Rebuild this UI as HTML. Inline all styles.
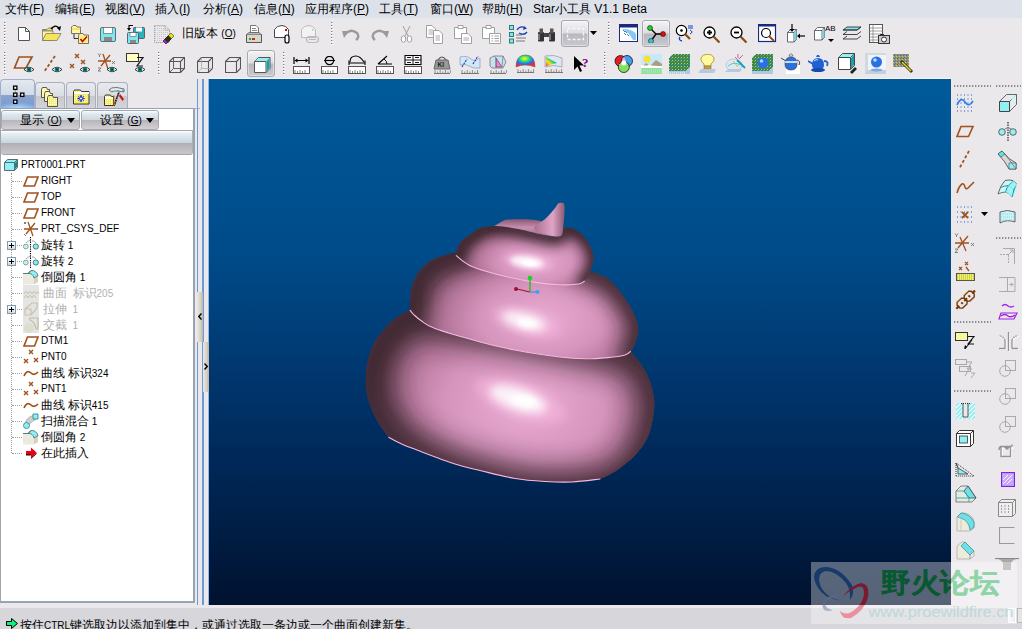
<!DOCTYPE html>
<html><head><meta charset="utf-8">
<style>
*{box-sizing:border-box}
body{margin:0;width:1022px;height:629px;position:relative;overflow:hidden;background:#ebe8ec;font-family:"Liberation Sans",sans-serif;font-size:12px;color:#000}
.a{position:absolute}
#menu{left:0;top:0;width:1022px;height:18px;background:#dde2ea}
#menu span{position:absolute;top:3px;white-space:nowrap;font-size:12px;line-height:13px}
#vp{left:209px;top:79px;width:742px;height:526px;background:linear-gradient(#005a9a 0%,#004a88 35%,#002a5c 70%,#00122f 100%)}
#panel{left:0;top:108px;width:195px;height:495px;background:#fff;border:1px solid #a0a4ac;border-right:2px solid #9aa2b0;border-bottom:2px solid #98a4b4;border-top-color:#8fa2bf}
#status{left:0;top:608px;width:1022px;height:21px;background:#d7d6db}

.tab{border:1px solid #a8b0bc;border-bottom:none;border-radius:4px 4px 0 0;background:linear-gradient(#e8eaef,#dcdee4 50%,#c9c9cd 51%,#d4d4d8)}
.tab.act{border-color:#9db0d0;background:radial-gradient(ellipse 60% 25% at 50% 100%,#a8dcff,rgba(150,200,255,0) 100%),linear-gradient(#e4e9f1,#d2dae6 50%,#8ba3cd 52%,#7f9bd0 85%,#8cb4e8)}
.btn{border:1px solid #a8a8ae;border-radius:3px;background:linear-gradient(#fbfcfd 0,#e2e9ef 15%,#ccd8e1 50%,#b8b6ba 52%,#d2d0d4 100%)}
.btn span{position:absolute;top:3px;font-size:12px;line-height:13px;white-space:nowrap}
.btn i{position:absolute;top:7px;width:0;height:0;border-left:4px solid transparent;border-right:4px solid transparent;border-top:5px solid #000}
.hdr{border-top:1px solid #a8a8ac;border-bottom:1px solid #a4a4a8;border-right:1px solid #b0b0b4;border-radius:0 0 3px 3px;background:linear-gradient(#ffffff 0,#e8eff5 10%,#c8d6e0 50%,#b0aeb2 51%,#c9c7cb 100%)}
.tt{font-size:10px;line-height:16px;white-space:nowrap}
.c{font-size:12px}
.plus{width:9px;height:9px;border:1px solid #7e98bc;background:linear-gradient(#fff,#ddd8c8)}
.plus:before{content:"";position:absolute;left:1px;top:3px;width:5px;height:1px;background:#000}
.plus:after{content:"";position:absolute;left:3px;top:1px;width:1px;height:5px;background:#000}
.spl{background:linear-gradient(90deg,#ece8e0,#d4d0c4 60%,#b8b4a8)}
.spl b{position:absolute;left:0;font-size:12px;line-height:10px;font-weight:bold}
.grip{width:2px;background:repeating-linear-gradient(90deg,transparent 0 0),repeating-linear-gradient(#7a7a82 0 1px,#fbfbfd 1px 2px,transparent 2px 3px);background-size:2px 100%}
.grip:after{content:"";position:absolute;left:1px;top:0;width:1px;height:100%;background:repeating-linear-gradient(#c8c8ce 0 1px,#fff 1px 2px,transparent 2px 3px)}
.griph{height:2px;background:repeating-linear-gradient(90deg,#8c8c94 0 1px,#c8c8cc 1px 2px,transparent 2px 3px)}
.pbtn{border:1px solid #a8a8b0;border-radius:3px;background:linear-gradient(#f4f4f6,#dcdce2 48%,#b8b8bf 52%,#c8c8ce);box-shadow:inset 0 0 0 1px rgba(255,255,255,.4)}
</style></head><body>
<div id="menu" class="a">
<span style="left:5px">文件(<u>F</u>)</span>
<span style="left:55px">编辑(<u>E</u>)</span>
<span style="left:105px">视图(<u>V</u>)</span>
<span style="left:155px">插入(<u>I</u>)</span>
<span style="left:203px">分析(<u>A</u>)</span>
<span style="left:254px">信息(<u>N</u>)</span>
<span style="left:305px">应用程序(<u>P</u>)</span>
<span style="left:379px">工具(<u>T</u>)</span>
<span style="left:430px">窗口(<u>W</u>)</span>
<span style="left:482px">帮助(<u>H</u>)</span>
<span style="left:533px">Star小工具 V1.1 Beta</span>
</div>
<div class="a" style="left:209px;top:78px;width:742px;height:1px;background:#f6f0ee"></div>
<div id="vp" class="a"></div>

<!-- left tabs -->
<div class="a" style="left:0;top:108px;width:200px;height:1px;background:#a9b5c8"></div>
<div class="a tab act" style="left:0;top:79px;width:35px;height:30px"><svg class="a" style="left:11px;top:5px" width="14" height="20"><path d="M3.5 4 V17 M5 10.5 H10" stroke="#999" stroke-width="0.8"/><rect x="1.6" y="1.1" width="3.3" height="3.3" fill="#fff" stroke="#000" stroke-width="1.3"/><rect x="1.6" y="8.1" width="3.3" height="3.3" fill="#fff" stroke="#000" stroke-width="1.3"/><rect x="8.6" y="8.1" width="3.3" height="3.3" fill="#fff" stroke="#000" stroke-width="1.3"/><rect x="1.6" y="15.1" width="3.3" height="3.3" fill="#fff" stroke="#000" stroke-width="1.3"/></svg></div>
<div class="a tab" style="left:35px;top:82px;width:30px;height:26px"><svg class="a" style="left:4px;top:3px" width="22" height="22"><defs><pattern id="chk" width="2" height="2" patternUnits="userSpaceOnUse"><rect width="2" height="2" fill="#f8f070"/><rect width="1" height="1" fill="#fff"/></pattern></defs><g stroke="#444" stroke-width="0.9"><path d="M1.5 3.5 L2.5 1.5 H6.5 L7.5 3.5 H9.5 V11.5 H1.5Z" fill="#fff9b0"/><path d="M4.5 7.5 L5.5 5.5 H9.5 L10.5 7.5 H12.5 V15.5 H4.5Z" fill="#fff9b0"/><path d="M7.5 11.5 L8.5 9.5 H12.5 L13.5 11.5 H17.5 V20.5 H7.5Z" fill="url(#chk)"/></g></svg></div>
<div class="a tab" style="left:66px;top:82px;width:30px;height:26px"><svg class="a" style="left:5px;top:6px" width="19" height="16"><defs><pattern id="chk2" width="2" height="2" patternUnits="userSpaceOnUse"><rect width="2" height="2" fill="#f8ee50"/><rect width="1" height="1" fill="#fffce0"/></pattern></defs><path d="M1.5 2.5 L2.5 1 H8.5 L9.5 2.5 H17 V15 H1.5Z" fill="url(#chk2)" stroke="#222" stroke-width="0.9"/><path d="M2 3 H17 V5 H2Z" fill="#fff"/><path d="M9 6 V13 M5.5 9.5 H12.5" stroke="#0a20e0" stroke-width="1.3"/><circle cx="9" cy="9.5" r="1.6" fill="#fff" stroke="#0a20e0" stroke-width="1"/><path d="M6.5 7 L7 7.5 M11.5 7 L11 7.5 M6.5 12 L7 11.5 M11.5 12 L11 11.5" stroke="#0a20e0" stroke-width="1.4"/></svg></div>
<div class="a tab" style="left:97px;top:82px;width:31px;height:26px"><svg class="a" style="left:5px;top:3px" width="24" height="22"><path d="M1.5 10.5 L2.5 9 H7.5 L8.5 10.5 H10.5 V19.5 H1.5Z" fill="url(#chk2)" stroke="#222" stroke-width="0.9"/><path d="M2 11 H10 V13 H2Z" fill="#fff"/><path d="M6 4 Q8 1 14 1.5 L21 3 V6 L15 5 Q11 4.5 9 6 Z" fill="#e8e8e8" stroke="#555" stroke-width="0.8"/><path d="M8 6 L10 5 M14 5 L16 4.5 M19 4 L21 5" stroke="#20c0d0" stroke-width="1.2"/><path d="M16 6 L11 20" stroke="#111" stroke-width="1.6"/><path d="M16 6 L11 20" stroke="#fff" stroke-width="0.8" stroke-dasharray="1 1.5"/><path d="M17 8 L21 13 L19.5 15 L16 10Z" fill="#d01010"/><path d="M11 9 V20" stroke="#c87830" stroke-width="0.9"/></svg></div>
<!-- panel -->
<div id="panel" class="a"></div>
<div class="a btn" style="left:1px;top:110px;width:79px;height:20px"><span style="left:18px">显示 <b style="font-weight:normal;font-size:10px">(<u>O</u>)</b></span><i style="left:65px"></i></div>
<div class="a btn" style="left:81px;top:110px;width:78px;height:20px"><span style="left:18px">设置 <b style="font-weight:normal;font-size:10px">(<u>G</u>)</b></span><i style="left:64px"></i></div>
<div class="a hdr" style="left:1px;top:130px;width:192px;height:25px"></div>
<div class="tree">
<div class="a" style="left:11px;top:173px;width:1px;height:280px;border-left:1px dotted #9a9a9a"></div>
<div class="a" style="left:4px;top:159px"><svg width="14" height="12"><path d="M0.5 3.5 L3.5 0.5 H13.5 V8.5 L10.5 11.5 H0.5 Z" fill="#8ff0f5" stroke="#5a6a70"/><path d="M10.5 3.5 V11.5 M10.5 3.5 L13.5 0.5 M0.5 3.5 H10.5" stroke="#5a6a70" fill="none"/><path d="M11 4 L13 2 V8 L11 10Z" fill="#138a90"/></svg></div>
<div class="a tt" style="left:21px;top:157px">PRT0001.PRT</div>
<div class="a" style="left:12px;top:181px;width:10px;height:1px;border-top:1px dotted #9a9a9a"></div>
<div class="a" style="left:23px;top:176px;line-height:0"><svg width="16" height="11"><path d="M4.5 1 H15 L11.5 10 H1 Z" fill="none" stroke="#a0521e" stroke-width="1.6"/></svg></div>
<div class="a tt" style="left:41px;top:173px;color:#000">RIGHT</div>
<div class="a" style="left:12px;top:197px;width:10px;height:1px;border-top:1px dotted #9a9a9a"></div>
<div class="a" style="left:23px;top:192px;line-height:0"><svg width="16" height="11"><path d="M4.5 1 H15 L11.5 10 H1 Z" fill="none" stroke="#a0521e" stroke-width="1.6"/></svg></div>
<div class="a tt" style="left:41px;top:189px;color:#000">TOP</div>
<div class="a" style="left:12px;top:213px;width:10px;height:1px;border-top:1px dotted #9a9a9a"></div>
<div class="a" style="left:23px;top:208px;line-height:0"><svg width="16" height="11"><path d="M4.5 1 H15 L11.5 10 H1 Z" fill="none" stroke="#a0521e" stroke-width="1.6"/></svg></div>
<div class="a tt" style="left:41px;top:205px;color:#000">FRONT</div>
<div class="a" style="left:12px;top:229px;width:10px;height:1px;border-top:1px dotted #9a9a9a"></div>
<div class="a" style="left:23px;top:221px;line-height:0"><svg width="16" height="16"><path d="M3 13 L12 2 M5 1 L10 15 M1 8 H13" stroke="#a0521e" stroke-width="1.3" fill="none"/><path d="M1 1 L3 3 M3 1 L1 3 M13 7 L15 9 M15 7 L13 9 M1 13 L3 15" stroke="#707070" stroke-width="0.9"/></svg></div>
<div class="a tt" style="left:41px;top:221px;color:#000">PRT_CSYS_DEF</div>
<div class="a" style="left:12px;top:245px;width:10px;height:1px;border-top:1px dotted #9a9a9a"></div>
<div class="a plus" style="left:7px;top:241px"></div>
<div class="a" style="left:23px;top:237px;line-height:0"><svg width="16" height="16"><path d="M3 6 Q7 2 8 4 M9 4 Q11 3 13 6" fill="none" stroke="#8a9a9a" stroke-width="0.8"/><circle cx="2.8" cy="9.5" r="2.4" fill="#c4f4f8" stroke="#708a8a" stroke-width="0.8"/><circle cx="12.8" cy="9.5" r="2.6" fill="#7eeef4" stroke="#506868" stroke-width="0.9"/><path d="M7.5 0 V16" stroke="#000" stroke-width="1.1" stroke-dasharray="1.3 1"/></svg></div>
<div class="a tt" style="left:41px;top:237px;color:#000"><span class="c">旋转</span> 1</div>
<div class="a" style="left:12px;top:261px;width:10px;height:1px;border-top:1px dotted #9a9a9a"></div>
<div class="a plus" style="left:7px;top:257px"></div>
<div class="a" style="left:23px;top:253px;line-height:0"><svg width="16" height="16"><path d="M3 6 Q7 2 8 4 M9 4 Q11 3 13 6" fill="none" stroke="#8a9a9a" stroke-width="0.8"/><circle cx="2.8" cy="9.5" r="2.4" fill="#c4f4f8" stroke="#708a8a" stroke-width="0.8"/><circle cx="12.8" cy="9.5" r="2.6" fill="#7eeef4" stroke="#506868" stroke-width="0.9"/><path d="M7.5 0 V16" stroke="#000" stroke-width="1.1" stroke-dasharray="1.3 1"/></svg></div>
<div class="a tt" style="left:41px;top:253px;color:#000"><span class="c">旋转</span> 2</div>
<div class="a" style="left:12px;top:277px;width:10px;height:1px;border-top:1px dotted #9a9a9a"></div>
<div class="a" style="left:23px;top:269px;line-height:0"><svg width="16" height="16"><path d="M0 4.5 H5 Q10 4 11 9 V15.5 H0Z" fill="#eceadc"/><path d="M11 9 L15 6.5 V13 L11 15.5Z" fill="#d4d2c0"/><path d="M5 4.5 Q10 4 11 9 L15 6.5 Q13 1 8 1.5 Z" fill="#8ef0f6" stroke="#3a6a70" stroke-width="0.8"/><path d="M0 4.5 H5 L8 1.5" fill="none" stroke="#3a5a60" stroke-width="0.8"/></svg></div>
<div class="a tt" style="left:41px;top:269px;color:#000"><span class="c">倒圆角</span> 1</div>
<div class="a" style="left:12px;top:293px;width:10px;height:1px;border-top:1px dotted #9a9a9a"></div>
<div class="a" style="left:23px;top:285px;line-height:0"><svg width="16" height="16"><rect x="0" y="0" width="16" height="16" fill="#e4e4e4"/><path d="M1 9 Q3 4 5 9 Q7 4 9 9 Q11 4 13 9 Q15 4 16 9 M1 13 Q3 8 5 13 Q7 8 9 13 Q11 8 13 13" stroke="#c8c4a8" fill="none" stroke-width="1"/></svg></div>
<div class="a tt" style="left:43px;top:285px;color:#b0b0b0"><span class="c">曲面</span>&nbsp; <span class="c">标识</span>205</div>
<div class="a" style="left:12px;top:309px;width:10px;height:1px;border-top:1px dotted #9a9a9a"></div>
<div class="a plus" style="left:7px;top:305px"></div>
<div class="a" style="left:23px;top:301px;line-height:0"><svg width="16" height="16"><rect x="0" y="0" width="16" height="16" fill="#e4e4e4"/><path d="M2 8 H8 V14 H2Z M2 8 L9 2 H14 V7 L8 14" fill="none" stroke="#c8c4a8" stroke-width="1.2"/></svg></div>
<div class="a tt" style="left:43px;top:301px;color:#b0b0b0"><span class="c">拉伸</span>&nbsp; 1</div>
<div class="a" style="left:12px;top:325px;width:10px;height:1px;border-top:1px dotted #9a9a9a"></div>
<div class="a" style="left:23px;top:317px;line-height:0"><svg width="16" height="16"><rect x="0" y="0" width="16" height="16" fill="#e4e4e4"/><circle cx="6" cy="11" r="5" fill="#dcdcd0"/><path d="M7 1 H15 V12 L13 12 Q12 5 7 3Z" fill="none" stroke="#c0bca0" stroke-width="1.2"/></svg></div>
<div class="a tt" style="left:43px;top:317px;color:#b0b0b0"><span class="c">交截</span>&nbsp; 1</div>
<div class="a" style="left:12px;top:341px;width:10px;height:1px;border-top:1px dotted #9a9a9a"></div>
<div class="a" style="left:23px;top:336px;line-height:0"><svg width="16" height="11"><path d="M4.5 1 H15 L11.5 10 H1 Z" fill="none" stroke="#a0521e" stroke-width="1.6"/></svg></div>
<div class="a tt" style="left:41px;top:333px;color:#000">DTM1</div>
<div class="a" style="left:12px;top:357px;width:10px;height:1px;border-top:1px dotted #9a9a9a"></div>
<div class="a" style="left:23px;top:349px;line-height:0"><svg width="16" height="16"><path d="M6 1 L10 5 M10 1 L6 5 M1 10 L5 14 M5 10 L1 14 M11 9 L15 13 M15 9 L11 13" stroke="#a0521e" stroke-width="1.4"/></svg></div>
<div class="a tt" style="left:41px;top:349px;color:#000">PNT0</div>
<div class="a" style="left:12px;top:373px;width:10px;height:1px;border-top:1px dotted #9a9a9a"></div>
<div class="a" style="left:23px;top:365px;line-height:0"><svg width="16" height="16"><path d="M1 11 Q4 4 8 8 Q11 11 15 7" stroke="#a0521e" stroke-width="1.7" fill="none"/></svg></div>
<div class="a tt" style="left:41px;top:365px;color:#000"><span class="c">曲线</span> <span class="c">标识</span>324</div>
<div class="a" style="left:12px;top:389px;width:10px;height:1px;border-top:1px dotted #9a9a9a"></div>
<div class="a" style="left:23px;top:381px;line-height:0"><svg width="16" height="16"><path d="M6 1 L10 5 M10 1 L6 5 M1 10 L5 14 M5 10 L1 14 M11 9 L15 13 M15 9 L11 13" stroke="#a0521e" stroke-width="1.4"/></svg></div>
<div class="a tt" style="left:41px;top:381px;color:#000">PNT1</div>
<div class="a" style="left:12px;top:405px;width:10px;height:1px;border-top:1px dotted #9a9a9a"></div>
<div class="a" style="left:23px;top:397px;line-height:0"><svg width="16" height="16"><path d="M1 11 Q4 4 8 8 Q11 11 15 7" stroke="#a0521e" stroke-width="1.7" fill="none"/></svg></div>
<div class="a tt" style="left:41px;top:397px;color:#000"><span class="c">曲线</span> <span class="c">标识</span>415</div>
<div class="a" style="left:12px;top:421px;width:10px;height:1px;border-top:1px dotted #9a9a9a"></div>
<div class="a" style="left:23px;top:413px;line-height:0"><svg width="16" height="16"><path d="M2 11 Q3 5 9 3 L14 1 L15 5 L10 8 Q6 10 5 14Z" fill="#d0d0d0" stroke="#909090" stroke-width="0.6"/><path d="M10 1 H15 V6 H10Z" fill="#8ff0f4" stroke="#309090" stroke-width="0.9"/><circle cx="3.5" cy="12.5" r="3" fill="#8ff0f4" stroke="#309090" stroke-width="0.9"/></svg></div>
<div class="a tt" style="left:41px;top:413px;color:#000"><span class="c">扫描混合</span> 1</div>
<div class="a" style="left:12px;top:437px;width:10px;height:1px;border-top:1px dotted #9a9a9a"></div>
<div class="a" style="left:23px;top:429px;line-height:0"><svg width="16" height="16"><path d="M0 4.5 H5 Q10 4 11 9 V15.5 H0Z" fill="#eceadc"/><path d="M11 9 L15 6.5 V13 L11 15.5Z" fill="#d4d2c0"/><path d="M5 4.5 Q10 4 11 9 L15 6.5 Q13 1 8 1.5 Z" fill="#8ef0f6" stroke="#3a6a70" stroke-width="0.8"/><path d="M0 4.5 H5 L8 1.5" fill="none" stroke="#3a5a60" stroke-width="0.8"/></svg></div>
<div class="a tt" style="left:41px;top:429px;color:#000"><span class="c">倒圆角</span> 2</div>
<div class="a" style="left:12px;top:453px;width:10px;height:1px;border-top:1px dotted #9a9a9a"></div>
<div class="a" style="left:23px;top:445px;line-height:0"><svg width="16" height="16"><path d="M3 6 H8 V2.5 L13.5 7.5 L8 12.5 V9 H3Z" fill="#f00018"/><path d="M3 9 H8 V12.5 L13.5 7.5 V9 L8 14 V10.5 H3Z" fill="#500008"/></svg></div>
<div class="a tt" style="left:41px;top:445px;color:#000"><span class="c">在此插入</span></div>
</div>
<!-- splitter -->
<div class="a" style="left:197px;top:79px;width:1px;height:526px;background:#6a9ad8"></div>
<div class="a" style="left:202px;top:79px;width:2px;height:526px;background:#6a9ad8"></div>
<div class="a" style="left:208px;top:79px;width:1px;height:526px;background:#90b8e8"></div>
<div class="a spl" style="left:197px;top:292px;width:6px;height:50px"><svg class="a" style="left:1px;top:21px" width="4" height="7"><path d="M3.5 0.5 L0.8 3.5 L3.5 6.5" fill="none" stroke="#000" stroke-width="1.4"/></svg></div>
<div class="a spl" style="left:203px;top:342px;width:6px;height:50px"><svg class="a" style="left:1px;top:21px" width="4" height="7"><path d="M0.5 0.5 L3.2 3.5 L0.5 6.5" fill="none" stroke="#000" stroke-width="1.4"/></svg></div>
<div id="status" class="a"></div>
<div class="a grip" style="left:4px;top:22px;height:24px"></div>
<svg class="a" style="left:17px;top:26px" width="14" height="16" viewBox="0 0 14 16"><path d="M1.5 1.5 H8.5 L12.5 5.5 V14.5 H1.5Z" fill="#fff" stroke="#555"/><path d="M8.5 1.5 V5.5 H12.5" fill="none" stroke="#555"/></svg>
<svg class="a" style="left:41px;top:24px" width="22" height="18" viewBox="0 0 22 18"><path d="M1.5 5.5 H6 L7.5 4 H11.5 V7 H1.5Z" fill="#f5ea60" stroke="#666" stroke-width="0.8"/><path d="M1.5 7 H12 V16.5 H1.5Z" fill="#fdf3a0" stroke="#777" stroke-width="0.8"/><path d="M1.5 16.5 L5 9.5 H20 L16 16.5Z" fill="#f6e45a" stroke="#777" stroke-width="0.8"/><path d="M10 5 Q14 0 18 4" fill="none" stroke="#000" stroke-width="1.3"/><path d="M16 4 L20 2 L19 7Z" fill="#000"/></svg>
<svg class="a" style="left:70px;top:24px" width="20" height="20" viewBox="0 0 20 20"><path d="M1.5 3 L3 1.5 H6 L7 3 H10.5 V9.5 H1.5Z" fill="#fff6a0" stroke="#555" stroke-width="0.8"/><path d="M1.5 5 H10.5" stroke="#e8d040"/><path d="M4 10 V14.5 H8" fill="none" stroke="#000" stroke-width="0.8"/><path d="M8.5 11 L10 9.5 H13 L14 11 H18.5 V19.5 H8.5Z" fill="#fff080" stroke="#555" stroke-width="0.8"/><path d="M10.5 15 L12.5 17.5 L17 12.5" fill="none" stroke="#c00" stroke-width="1.6"/></svg>
<svg class="a" style="left:100px;top:27px" width="16" height="15" viewBox="0 0 16 15"><rect x="0.5" y="0.5" width="15" height="14" rx="1.5" fill="#7fe7ee" stroke="#5a6e74"/><rect x="3.5" y="0.5" width="9" height="6" fill="#fff" stroke="#5a6e74" stroke-width="0.7"/><rect x="4" y="10" width="8" height="4" fill="#888"/></svg>
<svg class="a" style="left:126px;top:24px" width="20" height="20" viewBox="0 0 20 20"><rect x="7.5" y="3.5" width="11" height="11" rx="1" fill="#2fb0b8" stroke="#445" stroke-width="0.8"/><rect x="10" y="3.5" width="6" height="4" fill="#fff"/><rect x="1.5" y="8.5" width="11" height="11" rx="1" fill="#7fe7ee" stroke="#445" stroke-width="0.8"/><rect x="4" y="8.5" width="6" height="4" fill="#fff" stroke="#445" stroke-width="0.5"/><rect x="4" y="16" width="6" height="3" fill="#888"/><path d="M7 1.5 H3 V5" fill="none" stroke="#000" stroke-width="1.1"/><path d="M1 4 L3 7 L5 4Z" fill="#000"/></svg>
<svg class="a" style="left:153px;top:24px" width="22" height="20" viewBox="0 0 22 20"><defs><pattern id="dp" width="2" height="2" patternUnits="userSpaceOnUse"><rect width="1" height="1" fill="#c8c8c8"/></pattern></defs><path d="M1.5 1.5 H12 L16.5 6 V18.5 H1.5Z" fill="url(#dp)" stroke="#9a9a9a" stroke-width="1" stroke-dasharray="1 1"/><path d="M12 1.5 V6 H16.5" fill="none" stroke="#9a9a9a" stroke-dasharray="1 1"/><path d="M10 17 L18 9 L21 12 L13 20Z" fill="#303010" stroke="#000" stroke-width="0.7"/><path d="M15.5 11.5 L18 9 L21 12 L18.5 14.5Z" fill="#e6e020"/><path d="M10 17 L11.5 15.5 L14.5 18.5 L13 20Z" fill="#b020c0"/></svg>
<div class="a" style="left:182px;top:26px;font-size:12px;line-height:14px;white-space:nowrap">旧版本 <span style="font-size:10px">(<u>O</u>)</span></div>
<svg class="a" style="left:245px;top:24px" width="18" height="20" viewBox="0 0 18 20"><path d="M5.5 1.5 H11 L13.5 4 V10 H5.5Z" fill="#fff" stroke="#555" stroke-width="0.8"/><path d="M7 4.5 H11 M7 6.5 H12 M7 8.5 H12" stroke="#555" stroke-width="0.7"/><path d="M1.5 10.5 H16.5 V18.5 H1.5Z" fill="#d8d8c8" stroke="#555"/><path d="M1.5 10.5 L4 8.5 H14 L16.5 10.5" fill="#bbb" stroke="#555" stroke-width="0.7"/><rect x="4" y="14" width="2" height="2" fill="#2a2"/><rect x="7" y="14" width="3" height="2" fill="#c22"/></svg>
<svg class="a" style="left:273px;top:24px" width="18" height="20" viewBox="0 0 18 20"><path d="M1.5 5.5 Q4 1.5 9 1.5 Q13 1.5 15.5 5.5 V13.5 H1.5Z" fill="#fff" stroke="#444"/><rect x="12" y="5" width="2" height="2" fill="#d00"/><rect x="12" y="11" width="4" height="8" rx="2" fill="#fff" stroke="#000" stroke-width="1.2"/></svg>
<svg class="a" style="left:300px;top:24px" width="20" height="20" viewBox="0 0 20 20"><path d="M1.5 5.5 Q4 1.5 9 1.5 Q13 1.5 15.5 5.5 V13.5 H1.5Z" fill="#f2f2f2" stroke="#bbb"/><rect x="12" y="5" width="1.5" height="1.5" fill="#bbb"/><rect x="6.5" y="12.5" width="12" height="6" rx="3" fill="none" stroke="#bbb" stroke-width="1.2"/><path d="M9 15.5 H16" stroke="#bbb"/></svg>
<div class="a grip" style="left:331px;top:22px;height:24px"></div>
<svg class="a" style="left:342px;top:29px" width="19" height="12" viewBox="0 0 19 12"><path d="M3 5 Q9 -1 15 4 Q18 8 14 11" fill="none" stroke="#9a9a9a" stroke-width="2.4"/><path d="M0 2 L7 2 L2 9Z" fill="#9a9a9a"/></svg>
<svg class="a" style="left:370px;top:29px" width="19" height="12" viewBox="0 0 19 12"><path d="M16 5 Q10 -1 4 4 Q1 8 5 11" fill="none" stroke="#9a9a9a" stroke-width="2.4"/><path d="M19 2 L12 2 L17 9Z" fill="#9a9a9a"/></svg>
<svg class="a" style="left:400px;top:25px" width="13" height="18" viewBox="0 0 13 18"><path d="M3 1 L8 11 M10 1 L5 11" stroke="#a0a0a0" stroke-width="1"/><ellipse cx="3.5" cy="14" rx="2.3" ry="3.2" fill="#fff" stroke="#a0a0a0"/><ellipse cx="9.5" cy="14" rx="2.3" ry="3.2" fill="#fff" stroke="#a0a0a0"/></svg>
<svg class="a" style="left:426px;top:25px" width="19" height="19" viewBox="0 0 19 19"><path d="M0.5 0.5 H6 L9.5 4 V12.5 H0.5Z" fill="#fff" stroke="#a0a0a0"/><path d="M7.5 5.5 H13 L16.5 9 V18.5 H7.5Z" fill="#fff" stroke="#a0a0a0"/><path d="M2.5 5 H7 M2.5 7 H7 M2.5 9 H7 M9.5 11 H14 M9.5 13 H14 M9.5 15 H14" stroke="#a0a0a0" stroke-width="0.9"/></svg>
<svg class="a" style="left:454px;top:25px" width="19" height="19" viewBox="0 0 19 19"><path d="M0.5 2.5 H12.5 V13.5 H0.5Z" fill="#fff" stroke="#a0a0a0"/><path d="M4 0.5 H9 V3.5 H4Z" fill="#fff" stroke="#a0a0a0"/><path d="M7.5 8.5 H14 L17.5 12 V18.5 H7.5Z" fill="#fff" stroke="#a0a0a0"/><path d="M9.5 13 H15 M9.5 15 H15" stroke="#a0a0a0" stroke-width="0.9"/></svg>
<svg class="a" style="left:482px;top:25px" width="20" height="19" viewBox="0 0 20 19"><path d="M0.5 2.5 H12.5 V13.5 H0.5Z" fill="#fff" stroke="#a0a0a0"/><path d="M4 0.5 H9 V3.5 H4Z" fill="#fff" stroke="#a0a0a0"/><path d="M7.5 8.5 H18.5 V18.5 H7.5Z" fill="#fff" stroke="#a0a0a0"/><path d="M9.5 11 H11 M9.5 13.5 H11 M9.5 16 H11 M12.5 11 H17 M12.5 13.5 H17 M12.5 16 H17" stroke="#a0a0a0" stroke-width="1.1"/></svg>
<svg class="a" style="left:509px;top:25px" width="20" height="19" viewBox="0 0 20 19"><rect x="0.5" y="0.5" width="4" height="4" fill="#7fe7ee" stroke="#377"/><rect x="0.5" y="7.5" width="4" height="4" fill="#7fe7ee" stroke="#377"/><rect x="0.5" y="14" width="4" height="4" fill="#7fe7ee" stroke="#377"/><path d="M7 10 H13 M7 13 H17 M7 16 H16" stroke="#777"/><path d="M8 5 Q11 0 16 3" fill="none" stroke="#1840c0" stroke-width="1.4"/><path d="M15 1 L18 3.5 L14 5Z" fill="#1840c0"/><path d="M18 7 Q15 11 10 8" fill="none" stroke="#1840c0" stroke-width="1.4"/></svg>
<svg class="a" style="left:537px;top:28px" width="20" height="14" viewBox="0 0 20 14"><rect x="1" y="4" width="6" height="9.5" rx="1" fill="#333"/><rect x="12" y="4" width="6" height="9.5" rx="1" fill="#333"/><rect x="2.5" y="0.5" width="3.5" height="5" fill="#555"/><rect x="13" y="0.5" width="3.5" height="5" fill="#555"/><rect x="7" y="5" width="5" height="4" fill="#444"/><path d="M2 6 V12 M13 6 V12" stroke="#bbb" stroke-width="1"/></svg>
<div class="a pbtn" style="left:561px;top:20px;width:28px;height:27px"></div>
<svg class="a" style="left:566px;top:27px" width="19" height="14" viewBox="0 0 19 14"><rect x="1.5" y="1.5" width="16" height="11" fill="none" stroke="#f8f8f8" stroke-width="1.3" stroke-dasharray="3 2"/></svg>
<svg class="a" style="left:590px;top:31px" width="7" height="4" viewBox="0 0 7 4"><path d="M0 0 H7 L3.5 4Z" fill="#000"/></svg>
<div class="a grip" style="left:608px;top:22px;height:24px"></div>
<svg class="a" style="left:619px;top:24px" width="19" height="18" viewBox="0 0 19 18"><rect x="0.5" y="0.5" width="18" height="17" fill="#fff" stroke="#1a2a80"/><rect x="0.5" y="0.5" width="18" height="3" fill="#1a2a80"/><path d="M3 5 Q14 5 17 10 V16 H14 Q10 8 3 5Z" fill="#88c8f0"/><path d="M4 6 L6 8 M6 7 L8 9 M5 9 L7 11 M8 10 L10 12" stroke="#0a60b0" stroke-width="0.8"/></svg>
<div class="a pbtn" style="left:642px;top:20px;width:28px;height:27px"></div>
<svg class="a" style="left:646px;top:25px" width="20" height="18" viewBox="0 0 20 18"><path d="M4 3 L10 9 L18 9 M10 9 L5 16" fill="none" stroke="#000" stroke-width="1.3"/><circle cx="4" cy="3" r="2.5" fill="#22d022" stroke="#000" stroke-width="0.5"/><circle cx="17" cy="9" r="2.5" fill="#e01010" stroke="#000" stroke-width="0.5"/><circle cx="5" cy="16" r="2.5" fill="#30c8d8" stroke="#000" stroke-width="0.5"/></svg>
<svg class="a" style="left:675px;top:24px" width="19" height="20" viewBox="0 0 19 20"><circle cx="6.5" cy="6.5" r="5.2" fill="#fff" stroke="#000" stroke-width="1.2"/><circle cx="6.5" cy="6.5" r="1.3" fill="#000"/><path d="M10 10 L15 15" stroke="#8a4a10" stroke-width="2.2"/><path d="M13 2 H18 M13 4 H18 M15 6 Q19 8 15 10" fill="none" stroke="#1840c0" stroke-width="1"/><path d="M7 17 Q3 16 5 13" fill="none" stroke="#1840c0" stroke-width="1.4"/></svg>
<svg class="a" style="left:703px;top:26px" width="18" height="18" viewBox="0 0 18 18"><circle cx="6.5" cy="6.5" r="5.5" fill="#fff" stroke="#000" stroke-width="1.3"/><path d="M4 6.5 H9 M6.5 4 V9" stroke="#000" stroke-width="1.8"/><path d="M10.5 10.5 L16.5 16.5" stroke="#8a4a10" stroke-width="2.2"/></svg>
<svg class="a" style="left:730px;top:26px" width="18" height="18" viewBox="0 0 18 18"><circle cx="6.5" cy="6.5" r="5.5" fill="#fff" stroke="#000" stroke-width="1.3"/><path d="M4 6.5 H9" stroke="#000" stroke-width="1.8"/><path d="M10.5 10.5 L16.5 16.5" stroke="#8a4a10" stroke-width="2.2"/></svg>
<svg class="a" style="left:758px;top:24px" width="19" height="19" viewBox="0 0 19 19"><rect x="0.5" y="0.5" width="17" height="17" fill="#fff" stroke="#1a2a80" stroke-width="1.2"/><rect x="0.5" y="0.5" width="17" height="2" fill="#1a2a80"/><circle cx="8" cy="9" r="4.5" fill="#fff" stroke="#000" stroke-width="1.2"/><path d="M11 12 L16 17" stroke="#8a4a10" stroke-width="2"/></svg>
<svg class="a" style="left:786px;top:24px" width="20" height="19" viewBox="0 0 20 19"><path d="M1.5 8.5 L4.5 5.5 H10.5 V15.5 L8 18 H1.5Z" fill="#fff" stroke="#445" stroke-width="0.8"/><path d="M1.5 8.5 H8 V18 M8 8.5 L10.5 5.5" fill="none" stroke="#445" stroke-width="0.8"/><path d="M8.5 8.5 L10.5 6 V15 L8.5 17Z" fill="#6ed8e0"/><path d="M6 0 V7" stroke="#000" stroke-width="1.2"/><path d="M3.5 5 L6 8 L8.5 5Z" fill="#000"/><path d="M19 12 H12" stroke="#000" stroke-width="1.2"/><path d="M14 9.5 L11 12 L14 14.5Z" fill="#000"/></svg>
<svg class="a" style="left:813px;top:23px" width="23" height="21" viewBox="0 0 23 21"><path d="M1.5 7.5 L4.5 4.5 H11.5 V14.5 L9 17 H1.5Z" fill="#fff" stroke="#445" stroke-width="0.8"/><path d="M1.5 7.5 H9 V17 M9 7.5 L11.5 4.5" fill="none" stroke="#445" stroke-width="0.8"/><path d="M9.5 8 L11.5 5.5 V14 L9.5 16Z" fill="#6ed8e0"/><text x="12" y="8" font-size="8" font-family="Liberation Sans" fill="#000">AB</text><path d="M15 16 H21 L18 19Z" fill="#000"/></svg>
<svg class="a" style="left:842px;top:26px" width="20" height="17" viewBox="0 0 20 17"><path d="M1 4 L5 1 H19 L15 4Z" fill="#7fe7ee" stroke="#333" stroke-width="0.9"/><path d="M1 4 H15 M1 8.5 L5 5.5 M15 4 L19 1" fill="none" stroke="#333" stroke-width="0.9"/><path d="M1 8.5 H15 L19 5.5 M1 13 L5 10 M1 13 H15 L19 10" fill="none" stroke="#333" stroke-width="0.9"/></svg>
<svg class="a" style="left:869px;top:24px" width="22" height="21" viewBox="0 0 22 21"><rect x="0.5" y="0.5" width="13" height="18" fill="#fff" stroke="#555"/><path d="M0.5 4 H13.5 M0.5 7 H13.5 M0.5 10 H13.5 M0.5 13 H13.5 M0.5 16 H13.5 M4 0.5 V18.5" stroke="#777" stroke-width="0.7"/><rect x="9.5" y="11.5" width="11" height="8" fill="#ccc" stroke="#333"/><circle cx="15" cy="15.5" r="2.5" fill="#fff" stroke="#333"/><rect x="11" y="10" width="4" height="2" fill="#333"/></svg>
<div class="a grip" style="left:4px;top:52px;height:24px"></div>
<svg class="a" style="left:13px;top:55px" width="23" height="20" viewBox="0 0 23 20"><path d="M6 2 H19 L13 13 H1.5Z" fill="none" stroke="#a0521e" stroke-width="1.7"/><path d="M11 14.5 Q16 10.0 21 14.5 Q16 19.0 11 14.5Z" fill="#fff" stroke="#222" stroke-width="0.9"/><circle cx="16" cy="14.5" r="2.3" fill="#0a8080"/><circle cx="16" cy="14.5" r="1" fill="#043"/></svg>
<svg class="a" style="left:43px;top:55px" width="21" height="20" viewBox="0 0 21 20"><path d="M12 1 L1 17" stroke="#a0521e" stroke-width="1.8" stroke-dasharray="3 2"/><path d="M9 14.5 Q14 10.0 19 14.5 Q14 19.0 9 14.5Z" fill="#fff" stroke="#222" stroke-width="0.9"/><circle cx="14" cy="14.5" r="2.3" fill="#0a8080"/><circle cx="14" cy="14.5" r="1" fill="#043"/></svg>
<svg class="a" style="left:69px;top:53px" width="23" height="22" viewBox="0 0 23 22"><path d="M6 1 L10 5 M10 1 L6 5 M1 11 L5 15 M5 11 L1 15 M12 7 L16 11 M16 7 L12 11" stroke="#a0521e" stroke-width="1.4"/><path d="M11 16.5 Q16 12.0 21 16.5 Q16 21.0 11 16.5Z" fill="#fff" stroke="#222" stroke-width="0.9"/><circle cx="16" cy="16.5" r="2.3" fill="#0a8080"/><circle cx="16" cy="16.5" r="1" fill="#043"/></svg>
<svg class="a" style="left:97px;top:53px" width="22" height="22" viewBox="0 0 22 22"><path d="M4 13 L13 2 M6 1 L11 16 M1 8 H14" stroke="#a0521e" stroke-width="1.3" fill="none"/><path d="M1 0.5 L2.5 2.5 L4 0.5 M2.5 2.5 V4 M15 8 L18 11 M18 8 L15 11 M1 15 H4 L1 18 H4" stroke="#666" stroke-width="0.8" fill="none"/><path d="M10 16.5 Q15 12.0 20 16.5 Q15 21.0 10 16.5Z" fill="#fff" stroke="#222" stroke-width="0.9"/><circle cx="15" cy="16.5" r="2.3" fill="#0a8080"/><circle cx="15" cy="16.5" r="1" fill="#043"/></svg>
<svg class="a" style="left:126px;top:53px" width="21" height="22" viewBox="0 0 21 22"><rect x="0.5" y="0.5" width="12" height="8" fill="#ffffc0" stroke="#333"/><path d="M11 4.5 H17 L11 13 H17" fill="none" stroke="#111" stroke-width="1.2"/><path d="M9 16.5 Q14 12.0 19 16.5 Q14 21.0 9 16.5Z" fill="#fff" stroke="#222" stroke-width="0.9"/><circle cx="14" cy="16.5" r="2.3" fill="#0a8080"/><circle cx="14" cy="16.5" r="1" fill="#043"/></svg>
<div class="a grip" style="left:158px;top:52px;height:24px"></div>
<svg class="a" style="left:169px;top:57px" width="16" height="16" viewBox="0 0 16 16"><path d="M0.5 4.5 L4.5 0.5 H15.5 V11.5 L11.5 15.5 H0.5Z M0.5 4.5 H11.5 V15.5 M11.5 4.5 L15.5 0.5" fill="none" stroke="#555" stroke-width="1.1"/><path d="M4.5 0.5 V11.5 H15.5 M4.5 11.5 L0.5 15.5" fill="none" stroke="#555" stroke-width="0.9"/></svg>
<svg class="a" style="left:197px;top:57px" width="16" height="16" viewBox="0 0 16 16"><path d="M0.5 4.5 L4.5 0.5 H15.5 V11.5 L11.5 15.5 H0.5Z M0.5 4.5 H11.5 V15.5 M11.5 4.5 L15.5 0.5" fill="none" stroke="#555" stroke-width="1.1"/><path d="M4.5 0.5 V11.5 H15.5 M4.5 11.5 L0.5 15.5" fill="none" stroke="#aaa" stroke-width="0.8"/></svg>
<svg class="a" style="left:225px;top:57px" width="16" height="16" viewBox="0 0 16 16"><path d="M0.5 4.5 L4.5 0.5 H15.5 V11.5 L11.5 15.5 H0.5Z M0.5 4.5 H11.5 V15.5 M11.5 4.5 L15.5 0.5" fill="none" stroke="#555" stroke-width="1.1"/></svg>
<div class="a pbtn" style="left:247px;top:50px;width:28px;height:27px"></div>
<svg class="a" style="left:254px;top:57px" width="17" height="16" viewBox="0 0 17 16"><path d="M0.5 4.5 L4.5 0.5 H16 V11.5 L12 15.5 H0.5Z" fill="#fff" stroke="#555"/><path d="M0.5 4.5 H12 V15.5 M12 4.5 L16 0.5" fill="none" stroke="#555"/><path d="M1 4 L4.8 1 H15.5 L11.8 4Z" fill="#8ef0f5"/><path d="M12.5 5 L15.5 1.5 V11 L12.5 14.5Z" fill="#1aa0a8"/></svg>
<div class="a grip" style="left:283px;top:52px;height:24px"></div>
<svg class="a" style="left:293px;top:56px" width="17" height="18" viewBox="0 0 17 18"><path d="M1 1 V8 M16 1 V8 M2 4.5 H15" stroke="#000" stroke-width="1.2"/><path d="M1.5 4.5 L4.5 2.5 V6.5Z M15.5 4.5 L12.5 2.5 V6.5Z" fill="#000"/><rect x="0.5" y="10.5" width="16" height="7" fill="#fff" stroke="#555"/><path d="M2.0 17 V14" stroke="#666" stroke-width="0.8"/><path d="M4.5 17 V15" stroke="#666" stroke-width="0.8"/><path d="M7.0 17 V14" stroke="#666" stroke-width="0.8"/><path d="M9.5 17 V15" stroke="#666" stroke-width="0.8"/><path d="M12.0 17 V14" stroke="#666" stroke-width="0.8"/></svg>
<svg class="a" style="left:321px;top:56px" width="17" height="18" viewBox="0 0 17 18"><circle cx="8.5" cy="4.5" r="4.2" fill="none" stroke="#000" stroke-width="1.2"/><path d="M3 4.5 H14" stroke="#000" stroke-width="1.2"/><rect x="0.5" y="10.5" width="16" height="7" fill="#fff" stroke="#555"/><path d="M2.0 17 V14" stroke="#666" stroke-width="0.8"/><path d="M4.5 17 V15" stroke="#666" stroke-width="0.8"/><path d="M7.0 17 V14" stroke="#666" stroke-width="0.8"/><path d="M9.5 17 V15" stroke="#666" stroke-width="0.8"/><path d="M12.0 17 V14" stroke="#666" stroke-width="0.8"/></svg>
<svg class="a" style="left:348px;top:55px" width="18" height="19" viewBox="0 0 18 19"><path d="M2 7 Q2 1 8 1 Q12 1 16 7" fill="none" stroke="#000" stroke-width="1.1"/><path d="M1 8 H17 M1 5.5 V10 M17 5.5 V10" stroke="#000" stroke-width="1.1"/><rect x="0.5" y="11.5" width="17" height="7" fill="#fff" stroke="#555"/><path d="M2.0 18 V15" stroke="#666" stroke-width="0.8"/><path d="M4.5 18 V16" stroke="#666" stroke-width="0.8"/><path d="M7.0 18 V15" stroke="#666" stroke-width="0.8"/><path d="M9.5 18 V16" stroke="#666" stroke-width="0.8"/><path d="M12.0 18 V15" stroke="#666" stroke-width="0.8"/><path d="M14.5 18 V16" stroke="#666" stroke-width="0.8"/></svg>
<svg class="a" style="left:376px;top:55px" width="18" height="19" viewBox="0 0 18 19"><path d="M2 9 H16 M2 9 L11 1" stroke="#000" stroke-width="1.1"/><path d="M8 4 Q11 6 11 9" fill="none" stroke="#000" stroke-width="0.9"/><rect x="0.5" y="11.5" width="17" height="7" fill="#fff" stroke="#555"/><path d="M2.0 18 V15" stroke="#666" stroke-width="0.8"/><path d="M4.5 18 V16" stroke="#666" stroke-width="0.8"/><path d="M7.0 18 V15" stroke="#666" stroke-width="0.8"/><path d="M9.5 18 V16" stroke="#666" stroke-width="0.8"/><path d="M12.0 18 V15" stroke="#666" stroke-width="0.8"/><path d="M14.5 18 V16" stroke="#666" stroke-width="0.8"/></svg>
<svg class="a" style="left:404px;top:55px" width="18" height="19" viewBox="0 0 18 19"><rect x="1" y="0.5" width="16" height="9" fill="#fff" stroke="#000" stroke-width="1.1"/><path d="M1 5 H17 M9 0.5 V9.5 M3 2.5 H7 M11 2.5 H15 M3 7.5 H7 M11 7.5 H15" stroke="#000" stroke-width="0.9"/><rect x="0.5" y="11.5" width="17" height="7" fill="#fff" stroke="#555"/><path d="M2.0 18 V15" stroke="#666" stroke-width="0.8"/><path d="M4.5 18 V16" stroke="#666" stroke-width="0.8"/><path d="M7.0 18 V15" stroke="#666" stroke-width="0.8"/><path d="M9.5 18 V16" stroke="#666" stroke-width="0.8"/><path d="M12.0 18 V15" stroke="#666" stroke-width="0.8"/><path d="M14.5 18 V16" stroke="#666" stroke-width="0.8"/></svg>
<svg class="a" style="left:433px;top:55px" width="18" height="19" viewBox="0 0 18 19"><path d="M5 5 Q9 -1 13 5" fill="none" stroke="#555" stroke-width="1.2"/><path d="M1 14 L3 5 H15 L17 14Z" fill="#999" stroke="#666"/><text x="4.5" y="12" font-size="6.5" font-weight="bold" font-family="Liberation Sans" fill="#222">KI</text><path d="M1 18.5 H17" stroke="#777"/><path d="M2.0 18 V15" stroke="#777" stroke-width="0.8"/><path d="M4.6 18 V16.5" stroke="#777" stroke-width="0.8"/><path d="M7.2 18 V15" stroke="#777" stroke-width="0.8"/><path d="M9.8 18 V16.5" stroke="#777" stroke-width="0.8"/><path d="M12.4 18 V15" stroke="#777" stroke-width="0.8"/><path d="M15.0 18 V16.5" stroke="#777" stroke-width="0.8"/><path d="M17.6 18 V15" stroke="#777" stroke-width="0.8"/></svg>
<svg class="a" style="left:459px;top:55px" width="22" height="19" viewBox="0 0 22 19"><path d="M1 2 Q8 0 12 4 Q16 7 21 3 V13 Q14 14 10 11 Q6 8 1 10Z" fill="#d0e8f8" stroke="#88a" stroke-width="0.6"/><path d="M3 12 L8 4 M14 9 L19 1" stroke="#1a40b0" stroke-width="1.2" stroke-dasharray="2 1"/><path d="M2 18.5 H20" stroke="#777"/><path d="M3.0 18 V15" stroke="#777" stroke-width="0.8"/><path d="M5.6 18 V16.5" stroke="#777" stroke-width="0.8"/><path d="M8.2 18 V15" stroke="#777" stroke-width="0.8"/><path d="M10.8 18 V16.5" stroke="#777" stroke-width="0.8"/><path d="M13.4 18 V15" stroke="#777" stroke-width="0.8"/><path d="M16.0 18 V16.5" stroke="#777" stroke-width="0.8"/><path d="M18.6 18 V15" stroke="#777" stroke-width="0.8"/></svg>
<svg class="a" style="left:489px;top:55px" width="18" height="19" viewBox="0 0 18 19"><path d="M1 3 L5 1 H14 L17 7 L14 13 H3 L1 11Z" fill="#c8e0f0" stroke="#666" stroke-width="0.7"/><path d="M7 3 L13 12 H7Z" fill="#f080d8" stroke="#444" stroke-width="0.6"/><path d="M5 1 L7 3 V13 M14 1 L13 12" fill="none" stroke="#666" stroke-width="0.6"/><path d="M1 18.5 H17" stroke="#777"/><path d="M2.0 18 V15" stroke="#777" stroke-width="0.8"/><path d="M4.6 18 V16.5" stroke="#777" stroke-width="0.8"/><path d="M7.2 18 V15" stroke="#777" stroke-width="0.8"/><path d="M9.8 18 V16.5" stroke="#777" stroke-width="0.8"/><path d="M12.4 18 V15" stroke="#777" stroke-width="0.8"/><path d="M15.0 18 V16.5" stroke="#777" stroke-width="0.8"/><path d="M17.6 18 V15" stroke="#777" stroke-width="0.8"/></svg>
<svg class="a" style="left:515px;top:54px" width="21" height="20" viewBox="0 0 21 20"><defs><radialGradient id="rb" cx="0.45" cy="0.3" r="0.8"><stop offset="0" stop-color="#ffff30"/><stop offset="0.3" stop-color="#30e060"/><stop offset="0.55" stop-color="#2070ff"/><stop offset="0.8" stop-color="#ff2020"/></radialGradient></defs><path d="M1 13 Q1 1 10.5 1 Q20 1 20 13 Q10 9 1 13Z" fill="url(#rb)" stroke="#666" stroke-width="0.6"/><path d="M2 18.5 H19" stroke="#777"/><path d="M3.0 18 V15" stroke="#777" stroke-width="0.8"/><path d="M5.6 18 V16.5" stroke="#777" stroke-width="0.8"/><path d="M8.2 18 V15" stroke="#777" stroke-width="0.8"/><path d="M10.8 18 V16.5" stroke="#777" stroke-width="0.8"/><path d="M13.4 18 V15" stroke="#777" stroke-width="0.8"/><path d="M16.0 18 V16.5" stroke="#777" stroke-width="0.8"/><path d="M18.6 18 V15" stroke="#777" stroke-width="0.8"/></svg>
<svg class="a" style="left:544px;top:54px" width="20" height="20" viewBox="0 0 20 20"><defs><linearGradient id="rb2" x1="0" y1="1" x2="1" y2="0"><stop offset="0" stop-color="#ff2020"/><stop offset="0.3" stop-color="#ffe020"/><stop offset="0.55" stop-color="#30d060"/><stop offset="0.8" stop-color="#2060ff"/></linearGradient></defs><path d="M1 13 V2 Q10 0 18 4 V13 Q10 10 1 13Z" fill="#d8e8f8" stroke="#888" stroke-width="0.6"/><path d="M2 12 V3 L13 9Z" fill="url(#rb2)"/><path d="M1 18.5 H19" stroke="#777"/><path d="M2.0 18 V15" stroke="#777" stroke-width="0.8"/><path d="M4.6 18 V16.5" stroke="#777" stroke-width="0.8"/><path d="M7.2 18 V15" stroke="#777" stroke-width="0.8"/><path d="M9.8 18 V16.5" stroke="#777" stroke-width="0.8"/><path d="M12.4 18 V15" stroke="#777" stroke-width="0.8"/><path d="M15.0 18 V16.5" stroke="#777" stroke-width="0.8"/><path d="M17.6 18 V15" stroke="#777" stroke-width="0.8"/></svg>
<svg class="a" style="left:573px;top:55px" width="19" height="18" viewBox="0 0 19 18"><path d="M1 1 V15 L4.5 11.5 L7 17 L9 16 L6.5 10.5 H11Z" fill="#000"/><text x="9" y="12" font-size="13" font-weight="bold" font-family="Liberation Serif" fill="#800080">?</text></svg>
<div class="a grip" style="left:604px;top:52px;height:24px"></div>
<svg class="a" style="left:614px;top:54px" width="20" height="20" viewBox="0 0 20 20"><circle cx="6.5" cy="7" r="5.5" fill="#e02020" stroke="#000" stroke-width="0.7"/><circle cx="13" cy="7" r="5.5" fill="#40a0f0" stroke="#000" stroke-width="0.7"/><circle cx="9.8" cy="13" r="5.5" fill="#80e060" stroke="#000" stroke-width="0.7"/><path d="M9.8 3 Q12.5 6 11.5 10 Q9.8 12 8 10 Q7 6 9.8 3Z" fill="#f0a0e0"/><circle cx="9.8" cy="9" r="2.5" fill="#fff"/><path d="M4 10 Q6 12 8 11" fill="#f0e040"/></svg>
<svg class="a" style="left:641px;top:54px" width="21" height="20" viewBox="0 0 21 20"><rect x="0" y="0" width="21" height="20" fill="#c8e8f8"/><circle cx="6" cy="5" r="3.5" fill="#f8e030"/><path d="M0 14 L5 9 L9 12 L15 6 L21 10 V14Z" fill="#a8a080"/><path d="M0 11 Q5 12 8 11 Q12 12 21 12 V14 H0Z" fill="#fff"/><rect x="0" y="14" width="21" height="6" fill="#90e0a0"/><path d="M0 16 H21 M0 18 H21" stroke="#c0f0c0" stroke-dasharray="1 1"/></svg>
<svg class="a" style="left:669px;top:54px" width="21" height="20" viewBox="0 0 21 20"><defs><pattern id="tx" width="3" height="3" patternUnits="userSpaceOnUse"><rect width="3" height="3" fill="#3a8a50"/><rect width="1" height="1" fill="#c0d040"/><rect x="2" y="1" width="1" height="1" fill="#6090c0"/></pattern></defs><path d="M0 4 L4 0 H21 V13 L17 17 H0Z" fill="url(#tx)"/><path d="M0 17 H17 L21 13 V20 H0Z" fill="#b0c8e0"/><path d="M1 19 H17" stroke="#fff" stroke-dasharray="1 1"/></svg>
<svg class="a" style="left:698px;top:54px" width="19" height="20" viewBox="0 0 19 20"><path d="M6 10 Q2 7 3 4 Q5 0 9.5 0.5 Q14 0 16 4 Q17 7 13 10 V12 H6Z" fill="#fff8a0" stroke="#a09020" stroke-width="0.8"/><rect x="6" y="12" width="7" height="3" fill="#c8a040" stroke="#806020" stroke-width="0.5"/><path d="M0 19 L3 15 H18 L16 19Z" fill="#b8c8e0"/></svg>
<svg class="a" style="left:725px;top:53px" width="21" height="21" viewBox="0 0 21 21"><ellipse cx="9" cy="12" rx="8" ry="6" fill="#d8ecf0" stroke="#aac" stroke-width="0.6"/><path d="M3 13 Q9 8 15 12" stroke="#60c0e0" fill="none"/><path d="M8 8 L13 14" stroke="#f0a030" stroke-width="0.9"/><path d="M12 7 L20 15" stroke="#10a0b0" stroke-width="1.8"/><path d="M13 1 L13 5 M10 4 L12 6 M16 4 L14 6 M18 2 L15 5" stroke="#e03090" stroke-width="0.8"/><path d="M0 19 L3 16 H17 L15 19Z" fill="#b8c8e0"/></svg>
<svg class="a" style="left:752px;top:54px" width="21" height="20" viewBox="0 0 21 20"><path d="M0 4 L4 0 H21 V13 L17 17 H0Z" fill="url(#tx)"/><circle cx="11" cy="9" r="5.5" fill="#2a70e0"/><circle cx="9.5" cy="7" r="1.8" fill="#a8d8ff"/><path d="M0 17 H17 L21 13 V20 H0Z" fill="#b0c8e0"/></svg>
<svg class="a" style="left:780px;top:53px" width="22" height="21" viewBox="0 0 22 21"><rect x="6" y="12" width="14" height="9" fill="#fff"/><path d="M5 11 Q5 4 11 4 Q17 4 17 11 Q17 17 11 17 Q5 17 5 11Z" fill="#2a70e0" stroke="#333" stroke-width="0.6"/><path d="M5 9 H17" stroke="#fff" stroke-width="1.5"/><path d="M1 5 L6 8 M17 7 Q21 8 19 12" fill="none" stroke="#444" stroke-width="1"/><path d="M9 3 H13 L12 1 H10Z" fill="#fff" stroke="#444" stroke-width="0.6"/></svg>
<svg class="a" style="left:808px;top:53px" width="21" height="21" viewBox="0 0 21 21"><path d="M4 12 Q4 5 10 5 Q16 5 16 12 Q16 17 10 17 Q4 17 4 12Z" fill="#2060d0"/><path d="M6 8 Q8 6 10 7" stroke="#a8d0ff" stroke-width="1.2" fill="none"/><path d="M0 8 L5 11 M16 8 Q21 8 19 13" fill="none" stroke="#2060d0" stroke-width="1.8"/><path d="M8 4 H12 L11 2 H9Z" fill="#2060d0"/><ellipse cx="10" cy="17" rx="7" ry="2" fill="#1848b0"/></svg>
<svg class="a" style="left:838px;top:53px" width="19" height="21" viewBox="0 0 19 21"><path d="M0.5 4.5 L4.5 0.5 H16.5 V12.5 L12.5 16.5 H0.5Z" fill="#fff" stroke="#444"/><path d="M0.5 4.5 H12.5 V16.5 M12.5 4.5 L16.5 0.5" fill="none" stroke="#444"/><path d="M1 4 L4.8 1 H16 L12.2 4Z" fill="#8ef0f5"/><path d="M13 5 L16 1.5 V12 L13 15.5Z" fill="#1aa0a8"/><path d="M12 19 L17 14 L19 16 L14 21Z" fill="#222"/></svg>
<svg class="a" style="left:865px;top:53px" width="21" height="21" viewBox="0 0 21 21"><rect x="0" y="0" width="21" height="21" fill="#f0f4f8"/><path d="M0 0 H21 V2 H3 V17 L0 20Z" fill="#d0d8e0"/><path d="M0 20 L3 17 H21 V21 H0Z" fill="#c0d0e0"/><circle cx="11.5" cy="9" r="5.5" fill="#2a70e0"/><circle cx="10" cy="7" r="1.8" fill="#b0e0ff"/><ellipse cx="11.5" cy="17" rx="6" ry="1.5" fill="#80a8e0"/></svg>
<svg class="a" style="left:893px;top:53px" width="21" height="21" viewBox="0 0 21 21"><defs><pattern id="tx2" width="3" height="3" patternUnits="userSpaceOnUse"><rect width="3" height="3" fill="#8a9a80"/><rect width="1" height="1" fill="#e0c040"/><rect x="2" y="1" width="1" height="1" fill="#4080c0"/><rect x="1" y="2" width="1" height="1" fill="#a04040"/></pattern></defs><rect x="0" y="1" width="16" height="13" fill="url(#tx2)"/><path d="M8 8 L19 19" stroke="#303010" stroke-width="3"/><path d="M9 9 L18 18" stroke="#f0d030" stroke-width="1.5"/></svg>
<div class="a griph" style="left:954px;top:85px;width:37px"></div>
<div class="a griph" style="left:996px;top:85px;width:25px"></div>
<svg class="a" style="left:956px;top:94px" width="19" height="18" viewBox="0 0 19 18"><path d="M1 1 H18 M1 5 H18 M1 9 H18 M1 13 H18 M1 17 H18" stroke="#1a50c0" stroke-width="1" stroke-dasharray="1 2.5"/><path d="M1 11 Q5 2 9 8 Q13 14 17 7" fill="none" stroke="#2a80f0" stroke-width="1.7"/></svg>
<svg class="a" style="left:998px;top:93px" width="20" height="20" viewBox="0 0 20 20"><path d="M1.5 8.5 H11.5 V18.5 H1.5Z" fill="#90f0f4" stroke="#444"/><path d="M1.5 8.5 L8.5 1.5 H18.5 V11.5 L11.5 18.5 M11.5 8.5 L18.5 1.5" fill="none" stroke="#444" stroke-width="0.8"/><path d="M9 2 H18 V11Z" fill="#d0f8fa" opacity="0.8"/></svg>
<svg class="a" style="left:956px;top:125px" width="18" height="13" viewBox="0 0 18 13"><path d="M5 1.5 H17 L12.5 11.5 H1Z" fill="none" stroke="#a0521e" stroke-width="1.6"/></svg>
<svg class="a" style="left:998px;top:121px" width="20" height="21" viewBox="0 0 20 21"><circle cx="4" cy="11" r="3.3" fill="#90f0f4" stroke="#444" stroke-width="0.8"/><circle cx="15" cy="11" r="3.3" fill="#90f0f4" stroke="#444" stroke-width="0.8"/><path d="M10 1 V20" stroke="#000" stroke-dasharray="1.5 1"/><path d="M7 8 Q10 5 13 8" fill="none" stroke="#777"/></svg>
<svg class="a" style="left:958px;top:150px" width="13" height="20" viewBox="0 0 13 20"><path d="M11 1 L1 19" stroke="#a0521e" stroke-width="1.8" stroke-dasharray="3 2.2"/></svg>
<svg class="a" style="left:997px;top:150px" width="21" height="20" viewBox="0 0 21 20"><path d="M1 4 L5 1 L8 4 Q11 9 19 13 V19 H12 Q8 11 1 4Z" fill="#d8d8d8" stroke="#444" stroke-width="0.8"/><path d="M1 4 L5 1 L8 4 L4 7Z" fill="#60e0e8" stroke="#444" stroke-width="0.6"/><path d="M12 13 H19 V19 H12Z" fill="#90f0f4" stroke="#444" stroke-width="0.6"/><path d="M8 4 L19 19" stroke="#555" stroke-width="0.6"/></svg>
<svg class="a" style="left:956px;top:180px" width="19" height="15" viewBox="0 0 19 15"><path d="M1 13 Q3 6 6 4 Q8 3 9 7 Q10 10 12 8 Q14 6 18 2" fill="none" stroke="#a0521e" stroke-width="1.6"/></svg>
<svg class="a" style="left:997px;top:178px" width="20" height="19" viewBox="0 0 20 19"><path d="M1 16 Q3 8 8 2.5 Q12 1.5 16 2.5 L20 6.5 Q18 11 15 19 Q12 15 9 15 Q5 15 1 16Z" fill="#c8f8fa"/><path d="M1 16 Q3 8 8 2.5 Q12 1.5 16 2.5 L20 6.5" fill="none" stroke="#555" stroke-width="0.9"/><path d="M3.5 9.5 Q8 7.5 12 7.5 L17 12 M1 16 Q5 14 9 14 Q12 15 15 19" fill="none" stroke="#666" stroke-width="0.9"/><path d="M16 3.5 Q13 6 11 8.5 Q9 11 9 14 M19 7 Q17 11 15 19" fill="none" stroke="#00a0a8" stroke-width="1.2"/><path d="M11 8 L16 3 L20 6.5 L16 12 Z M9 14 L11 8.5 L16 12 L15 19Z" fill="#90f4f8" opacity="0.8"/></svg>
<svg class="a" style="left:956px;top:206px" width="19" height="19" viewBox="0 0 19 19"><path d="M1 1 H18 M1 6 H18 M1 11 H18 M1 16 H18" stroke="#1a50c0" stroke-width="1" stroke-dasharray="1 2.5"/><path d="M6 6 L12 12 M12 6 L6 12" stroke="#a0521e" stroke-width="1.8"/></svg>
<svg class="a" style="left:981px;top:212px" width="8" height="5" viewBox="0 0 8 5"><path d="M0 0 H7 L3.5 4Z" fill="#000"/></svg>
<svg class="a" style="left:999px;top:209px" width="17" height="15" viewBox="0 0 17 15"><path d="M1 3 Q8 0 16 3 V13 Q8 10 1 14Z" fill="#c8f4f8" stroke="#444" stroke-width="0.8"/><path d="M2 5 H15 M2 8 H15 M2 11 H15" stroke="#90d8e0" stroke-dasharray="1 1"/></svg>
<div class="a griph" style="left:996px;top:237px;width:25px"></div>
<svg class="a" style="left:954px;top:233px" width="22" height="21" viewBox="0 0 22 21"><path d="M4 15 L14 3 M6 4 L12 18 M1 10 H15" stroke="#a0521e" stroke-width="1.3" fill="none"/><path d="M1 0.5 L2.5 2.5 L4 0.5 M2.5 2.5 V4 M17 10 L20 13 M20 10 L17 13 M1 16 H4 L1 19.5 H4" stroke="#666" stroke-width="0.8" fill="none"/></svg>
<svg class="a" style="left:956px;top:261px" width="20" height="21" viewBox="0 0 20 21"><path d="M9 1 L12 4 M12 1 L9 4 M3 6 L6 9 M6 6 L3 9 M10 6 L13 10" stroke="#a0521e" stroke-width="1.3"/><rect x="0.5" y="12.5" width="18" height="7" fill="#f0f060" stroke="#555"/><path d="M1 14 H18 M1 16 H18 M1 18 H18" stroke="#a0a030" stroke-width="0.8" stroke-dasharray="1 1"/></svg>
<svg class="a" style="left:999px;top:247px" width="17" height="18" viewBox="0 0 17 18"><path d="M1 7.5 H9.5 V17" fill="none" stroke="#aaa" stroke-dasharray="2 1"/><path d="M4 1.5 H15.5 V17" fill="none" stroke="#aaa"/><path d="M9 8 L14 3 M11 3 H14 V6" fill="none" stroke="#aaa"/></svg>
<svg class="a" style="left:954px;top:288px" width="24" height="24" viewBox="0 0 24 24"><g transform="rotate(-44 12 12)"><g fill="none" stroke="#7a3a08" stroke-width="1.4"><path d="M2 9.5 L4 7.5 H10 L12 9.5 V13.5 L10 15.5 H4 L2 13.5Z"/><path d="M12 9.5 L14 7.5 H20 L22 9.5 V13.5 L20 15.5 H14 L12 13.5Z"/><path d="M-1 11.5 H3 M6 11.5 H8 M10 11.5 H14 M16 11.5 H18 M21 11.5 H25" stroke-width="2.2"/></g><path d="M4 6.9 H10 M14 6.9 H20" stroke="#d8c040" stroke-width="0.6"/></g></svg>
<svg class="a" style="left:998px;top:277px" width="18" height="15" viewBox="0 0 18 15"><path d="M1 0.5 H17 V14.5 H1" fill="none" stroke="#aaa"/><path d="M9.5 0.5 V14.5" stroke="#aaa"/><path d="M11 7.5 H15 M13 5.5 L15 7.5 L13 9.5" fill="none" stroke="#aaa"/></svg>
<svg class="a" style="left:998px;top:303px" width="20" height="17" viewBox="0 0 20 17"><path d="M3 10 L1 16 H16 L19 10Z" fill="none" stroke="#a020e0" stroke-width="1.2"/><path d="M4 3 Q7 0 10 3 Q13 5 16 3 M3 13 Q7 10 10 13 Q13 15 17 12" fill="none" stroke="#a020e0" stroke-width="1.4"/></svg>
<div class="a griph" style="left:954px;top:321px;width:37px"></div>
<svg class="a" style="left:955px;top:332px" width="21" height="18" viewBox="0 0 21 18"><rect x="0.5" y="0.5" width="12" height="8" fill="#f8f8a0" stroke="#333"/><path d="M13 4.5 H19 L13 12 H19" fill="none" stroke="#111" stroke-width="1.1"/><path d="M17 8 L10 17" stroke="#000"/><path d="M9 17 L10 13 L12 15Z" fill="#000"/></svg>
<svg class="a" style="left:997px;top:330px" width="22" height="22" viewBox="0 0 22 22"><g fill="none" stroke="#fff" stroke-width="1.3" transform="translate(0.8 0.8)"><path d="M11.5 2 V21 M2 18.5 H8 V10 Q6 6 2 5.5 M21 18.5 H15 V10 Q17 6 21 5.5"/></g><g fill="none" stroke="#939393" stroke-width="1.3"><path d="M11.5 2 V21 M2 18.5 H8 V10 M15 18.5 H21 M15 18.5 V10"/><path d="M8 10 Q6 6 2 5.5 M15 10 Q17 6 21 5.5" stroke-dasharray="1.5 1"/></g></svg>
<svg class="a" style="left:955px;top:359px" width="21" height="20" viewBox="0 0 21 20"><g fill="none" stroke="#a8a8a8"><rect x="0.5" y="0.5" width="11" height="5"/><rect x="4.5" y="7.5" width="11" height="5"/><path d="M12 3 H17 L12 10 H17 M15 8 L10 17 M16 14 H20 L16 19"/></g></svg>
<svg class="a" style="left:999px;top:360px" width="17" height="17" viewBox="0 0 17 17"><circle cx="6" cy="11" r="5.3" fill="none" stroke="#aaa"/><rect x="6.5" y="0.5" width="10" height="10" fill="none" stroke="#aaa"/></svg>
<div class="a griph" style="left:954px;top:390px;width:37px"></div>
<svg class="a" style="left:999px;top:387px" width="17" height="18" viewBox="0 0 17 18"><circle cx="6" cy="12" r="5.3" fill="none" stroke="#aaa"/><rect x="6.5" y="1.5" width="10" height="10" fill="none" stroke="#aaa"/></svg>
<svg class="a" style="left:956px;top:403px" width="19" height="16" viewBox="0 0 19 16"><defs><pattern id="ht" width="3" height="3" patternUnits="userSpaceOnUse" patternTransform="rotate(45)"><rect width="3" height="3" fill="#90f0f4"/><rect width="1" height="3" fill="#fff"/></pattern></defs><path d="M0 0 H7 V15 H12 V0 H19 V16 H0Z" fill="url(#ht)"/><path d="M7 0 V14 H12 V0" fill="none" stroke="#333" stroke-width="0.8"/><path d="M5 0.5 H14" stroke="#333" stroke-dasharray="1 1"/></svg>
<svg class="a" style="left:999px;top:416px" width="17" height="17" viewBox="0 0 17 17"><circle cx="6" cy="11" r="5.3" fill="none" stroke="#aaa"/><rect x="6.5" y="0.5" width="10" height="10" fill="none" stroke="#aaa"/></svg>
<svg class="a" style="left:956px;top:430px" width="18" height="17" viewBox="0 0 18 17"><path d="M0.5 3.5 L3.5 0.5 H17.5 V13.5 L14.5 16.5 H0.5Z" fill="#fff" stroke="#333"/><path d="M0.5 3.5 H14.5 V16.5 M14.5 3.5 L17.5 0.5" fill="none" stroke="#333"/><rect x="3.5" y="6" width="8" height="7" fill="#90f0f4" stroke="#333" stroke-width="0.8"/></svg>
<svg class="a" style="left:998px;top:444px" width="16" height="16" viewBox="0 0 16 16"><path d="M3.5 3.5 H15 M3.5 3.5 V12.5 H12.5 V3.5" fill="none" stroke="#fff" stroke-width="1.3" transform="translate(0.7 0.7)"/><path d="M3 2.5 H12.5 V12.5 H3Z M1 6 Q1 3 3 2.5 M12.5 2.5 Q14.5 2 14.5 0.5" fill="none" stroke="#939393" stroke-width="1.3"/><path d="M6 3 L8 5.5 H10 L12 3" fill="#939393"/></svg>
<svg class="a" style="left:955px;top:462px" width="20" height="15" viewBox="0 0 20 15"><path d="M1 14 V1 L19 14Z" fill="none" stroke="#333" stroke-dasharray="1 1"/><path d="M3 6 L3 12 H13Z" fill="#90f0f4" stroke="#333" stroke-width="0.8"/><path d="M1 1 L3 6" stroke="#333"/></svg>
<svg class="a" style="left:1001px;top:472px" width="14" height="15" viewBox="0 0 14 15"><rect x="0.5" y="0.5" width="13" height="14" fill="#c8a8f8" stroke="#8020e0" stroke-width="1.2"/><path d="M2 12 L11 3 M2 8 L7 3 M6 12 L11 7" stroke="#fff" stroke-width="0.9"/></svg>
<svg class="a" style="left:955px;top:483px" width="22" height="21" viewBox="0 0 22 21"><path d="M1 8 L6 3 H13 L21 15 L17 19 H1Z" fill="#e8e8e0" stroke="#555" stroke-width="0.7"/><path d="M13 3 L21 15 L14 15 L9 8Z" fill="#70e0e8" stroke="#333" stroke-width="0.7"/><path d="M1 8 H9 L14 15 V19 M1 15 H14" fill="none" stroke="#2aa" stroke-width="0.9"/></svg>
<svg class="a" style="left:997px;top:498px" width="20" height="20" viewBox="0 0 20 20"><path d="M1.5 4.5 L4.5 1.5 H18.5 V15.5 L15.5 18.5 H1.5Z" fill="#eee" stroke="#888"/><path d="M1.5 4.5 H15.5 V18.5 M15.5 4.5 L18.5 1.5" fill="none" stroke="#888"/><path d="M4 8 H5 M7.5 8 H8.5 M11 8 H12 M4 11 H5 M7.5 11 H8.5 M11 11 H12 M4 14 H5 M7.5 14 H8.5 M11 14 H12" stroke="#888" stroke-width="1.5"/></svg>
<svg class="a" style="left:956px;top:512px" width="20" height="20" viewBox="0 0 20 20"><path d="M1 5 L5 1 H9 Q17 3 18 10 V16 L14 19 H1Z" fill="#ecebdc" stroke="#999" stroke-width="0.6"/><path d="M5 1 Q14 2 18 10 V15 L14 18 Q13 9 5 6 L1 5Z" fill="#70e0e8" stroke="#2a8a90" stroke-width="0.7"/><path d="M1 5 L5 6 V19" fill="none" stroke="#bbb" stroke-width="0.6"/></svg>
<svg class="a" style="left:999px;top:527px" width="16" height="17" viewBox="0 0 16 17"><path d="M15.5 0.5 H0.5 V16.5 H15.5" fill="none" stroke="#999" stroke-width="1.1"/></svg>
<svg class="a" style="left:956px;top:541px" width="20" height="19" viewBox="0 0 20 19"><path d="M1 5 L6 1 H9 L18 10 V15 L14 18 H1Z" fill="#ecebdc" stroke="#999" stroke-width="0.6"/><path d="M5 5 L9 1 L18 10 L14 14Z" fill="#70e0e8" stroke="#2a8a90" stroke-width="0.7"/><path d="M14 14 V18" stroke="#999"/></svg>
<svg class="a" style="left:995px;top:558px" width="24" height="13" viewBox="0 0 24 13"><path d="M0 0.5 H24" stroke="#888" stroke-width="1.2"/><path d="M3 1 Q8 3 8 6 V12 H16 V6 Q16 3 21 1Z" fill="#a8a8a8"/></svg>
<svg class="a" style="left:209px;top:79px" width="742" height="526" viewBox="209 79 742 526">
<defs>
<filter id="mdlrbb" x="-20%" y="-20%" width="140%" height="140%"><feGaussianBlur stdDeviation="14"/></filter>
<filter id="mdlrbm" x="-20%" y="-20%" width="140%" height="140%"><feGaussianBlur stdDeviation="9.520000000000001"/></filter>
<filter id="mdlrbt" x="-20%" y="-20%" width="140%" height="140%"><feGaussianBlur stdDeviation="5.6000000000000005"/></filter>
<filter id="mdlbl" x="-50%" y="-50%" width="200%" height="200%"><feGaussianBlur stdDeviation="5"/></filter>
<filter id="mdlbl2" x="-50%" y="-50%" width="200%" height="200%"><feGaussianBlur stdDeviation="2.5"/></filter>
<filter id="mdlbl1" x="-50%" y="-50%" width="200%" height="200%"><feGaussianBlur stdDeviation="1.2"/></filter>
<clipPath id="cb"><path d="M409.9 310.0 C407.5 311.3 400.0 314.6 395.6 317.9 C391.2 321.2 387.2 325.6 383.6 329.8 C380.0 334.0 376.6 338.0 374.0 343.0 C371.4 348.0 369.4 354.1 368.0 359.7 C366.6 365.3 365.9 370.8 365.7 376.4 C365.4 381.9 365.5 387.4 366.5 393.0 C367.5 398.6 369.6 404.6 371.7 409.8 C373.8 415.0 376.1 419.4 378.9 424.0 C381.7 428.6 386.8 435.0 388.4 437.2 L388.4 437.2 C390.8 438.4 397.9 442.3 402.7 444.4 C407.5 446.5 408.3 446.7 417.0 450.0 C425.7 453.3 444.5 460.6 455.0 464.0 C465.5 467.4 470.0 468.1 480.0 470.5 C490.0 472.9 504.2 476.7 515.0 478.5 C525.8 480.3 535.5 480.9 545.0 481.5 C554.5 482.1 562.8 482.4 572.0 482.0 C581.2 481.6 595.6 479.5 600.3 479.0 L600.3 479.0 C602.8 477.7 609.8 475.2 615.5 471.4 C621.2 467.6 629.2 461.7 634.6 456.0 C640.0 450.3 644.8 444.0 648.0 437.0 C651.2 430.0 652.8 421.0 653.7 414.0 C654.7 407.0 655.0 402.0 653.7 395.0 C652.4 388.0 649.8 379.3 646.0 372.0 C642.2 364.7 633.3 354.5 630.8 351.0 L630.8 351.0 C612.3 347.5 556.8 336.8 520.0 330.0 C483.2 323.2 428.2 313.3 409.9 310.0 Z"/></clipPath>
<clipPath id="cm"><path d="M409.9 310.0 C409.9 308.5 409.7 304.3 409.9 301.0 C410.1 297.7 410.2 294.1 411.0 290.3 C411.8 286.5 413.0 282.0 414.7 278.4 C416.4 274.8 418.5 271.8 421.2 268.8 C423.9 265.8 427.2 262.7 430.8 260.5 C434.4 258.3 438.3 257.1 442.7 255.7 C447.1 254.3 454.6 252.6 457.0 252.0 L457.0 252.0 C467.5 249.7 497.4 234.7 520.0 238.0 C542.6 241.3 580.5 266.3 592.6 272.0 L592.6 272.0 C595.1 273.1 602.8 274.6 607.9 278.6 C613.0 282.6 618.8 289.8 623.2 295.8 C627.7 301.9 632.1 309.2 634.6 314.9 C637.1 320.6 638.4 324.9 638.4 330.0 C638.4 335.1 635.9 341.9 634.6 345.4 C633.3 348.9 631.4 350.2 630.8 351.1 L630.8 351.1 C629.8 351.8 628.8 353.9 625.0 355.0 C621.2 356.1 614.6 357.0 607.9 357.6 C601.2 358.2 593.0 358.9 585.0 358.8 C577.0 358.7 571.7 358.5 560.0 357.0 C548.3 355.5 528.3 352.5 515.0 350.0 C501.7 347.5 493.3 345.6 480.0 342.0 C466.7 338.4 444.9 332.2 435.0 328.6 C425.1 325.0 424.2 322.7 420.6 320.3 C417.0 317.9 415.3 316.0 413.5 314.3 C411.7 312.6 410.5 310.7 409.9 310.0 Z"/></clipPath>
<clipPath id="ct"><path d="M455.9 255.4 C456.2 254.1 456.4 250.0 457.5 247.5 C458.6 245.0 459.9 242.7 462.3 240.3 C464.7 237.9 468.6 235.3 471.8 233.2 C475.0 231.1 477.2 228.8 481.3 227.6 C485.4 226.4 490.0 225.7 496.4 226.0 C502.8 226.3 511.3 227.6 519.5 229.2 C527.7 230.8 539.8 234.4 545.7 235.5 C551.6 236.6 552.3 237.1 555.0 236.0 C557.7 234.9 559.6 230.4 562.0 229.0 C564.4 227.6 566.2 226.9 569.2 227.5 C572.2 228.1 576.7 230.2 579.8 232.6 C582.9 235.0 585.9 238.7 588.0 242.0 C590.1 245.3 591.7 248.9 592.6 252.2 C593.5 255.5 593.9 258.4 593.4 261.8 C592.9 265.2 590.8 269.7 589.4 272.9 C588.0 276.1 585.5 279.6 584.7 280.9 L584.7 280.9 C583.6 281.4 582.5 283.4 578.3 284.0 C574.0 284.6 566.4 285.1 559.2 284.8 C552.1 284.5 544.7 283.9 535.4 282.4 C526.1 280.9 514.2 278.6 503.6 276.0 C493.0 273.4 479.8 269.9 471.8 266.5 C463.9 263.1 458.5 257.2 455.9 255.4 Z"/></clipPath>
<radialGradient id="gb" gradientUnits="userSpaceOnUse" cx="525" cy="405" r="160" gradientTransform="translate(525 405) scale(1 0.72) translate(-525 -405)">
<stop offset="0" stop-color="rgb(234, 174, 212)"/><stop offset="0.25" stop-color="rgb(224, 160, 200)"/><stop offset="0.5" stop-color="rgb(212, 148, 188)"/><stop offset="0.7" stop-color="rgb(192, 128, 166)"/><stop offset="0.85" stop-color="rgb(170, 112, 146)"/><stop offset="1" stop-color="rgb(138, 90, 114)"/></radialGradient>
<radialGradient id="gm" gradientUnits="userSpaceOnUse" cx="540" cy="320" r="120" gradientTransform="translate(540 320) scale(1 0.6) translate(-540 -320)">
<stop offset="0" stop-color="rgb(234, 174, 212)"/><stop offset="0.25" stop-color="rgb(224, 160, 200)"/><stop offset="0.5" stop-color="rgb(212, 148, 188)"/><stop offset="0.7" stop-color="rgb(192, 128, 166)"/><stop offset="0.85" stop-color="rgb(170, 112, 146)"/><stop offset="1" stop-color="rgb(138, 90, 114)"/></radialGradient>
<radialGradient id="gt" gradientUnits="userSpaceOnUse" cx="535" cy="262" r="72" gradientTransform="translate(535 262) scale(1 0.55) translate(-535 -262)">
<stop offset="0" stop-color="rgb(234, 174, 212)"/><stop offset="0.25" stop-color="rgb(224, 160, 200)"/><stop offset="0.5" stop-color="rgb(212, 148, 188)"/><stop offset="0.7" stop-color="rgb(192, 128, 166)"/><stop offset="0.85" stop-color="rgb(170, 112, 146)"/><stop offset="1" stop-color="rgb(138, 90, 114)"/></radialGradient>
<linearGradient id="gtip" x1="0" y1="0" x2="1" y2="0"><stop offset="0" stop-color="#a87090"/><stop offset="0.6" stop-color="#e0a4c8"/><stop offset="1" stop-color="#8a5a72"/></linearGradient>
<linearGradient id="grim" x1="0" y1="0" x2="0" y2="1"><stop offset="0" stop-color="#8a5a72"/><stop offset="0.5" stop-color="#c890b0"/><stop offset="1" stop-color="#9a6a84"/></linearGradient>
</defs>
<g clip-path="url(#cb)"><path d="M409.9 310.0 C407.5 311.3 400.0 314.6 395.6 317.9 C391.2 321.2 387.2 325.6 383.6 329.8 C380.0 334.0 376.6 338.0 374.0 343.0 C371.4 348.0 369.4 354.1 368.0 359.7 C366.6 365.3 365.9 370.8 365.7 376.4 C365.4 381.9 365.5 387.4 366.5 393.0 C367.5 398.6 369.6 404.6 371.7 409.8 C373.8 415.0 376.1 419.4 378.9 424.0 C381.7 428.6 386.8 435.0 388.4 437.2 L388.4 437.2 C390.8 438.4 397.9 442.3 402.7 444.4 C407.5 446.5 408.3 446.7 417.0 450.0 C425.7 453.3 444.5 460.6 455.0 464.0 C465.5 467.4 470.0 468.1 480.0 470.5 C490.0 472.9 504.2 476.7 515.0 478.5 C525.8 480.3 535.5 480.9 545.0 481.5 C554.5 482.1 562.8 482.4 572.0 482.0 C581.2 481.6 595.6 479.5 600.3 479.0 L600.3 479.0 C602.8 477.7 609.8 475.2 615.5 471.4 C621.2 467.6 629.2 461.7 634.6 456.0 C640.0 450.3 644.8 444.0 648.0 437.0 C651.2 430.0 652.8 421.0 653.7 414.0 C654.7 407.0 655.0 402.0 653.7 395.0 C652.4 388.0 649.8 379.3 646.0 372.0 C642.2 364.7 633.3 354.5 630.8 351.0 L630.8 351.0 C612.3 347.5 556.8 336.8 520.0 330.0 C483.2 323.2 428.2 313.3 409.9 310.0 Z" fill="url(#gb)"/>
<path d="M409.9 310.0 C407.5 311.3 400.0 314.6 395.6 317.9 C391.2 321.2 387.2 325.6 383.6 329.8 C380.0 334.0 376.6 338.0 374.0 343.0 C371.4 348.0 369.4 354.1 368.0 359.7 C366.6 365.3 365.9 370.8 365.7 376.4 C365.4 381.9 365.5 387.4 366.5 393.0 C367.5 398.6 369.6 404.6 371.7 409.8 C373.8 415.0 376.1 419.4 378.9 424.0 C381.7 428.6 386.8 435.0 388.4 437.2 L388.4 437.2 C393.7 440.7 408.9 452.2 420.0 458.0 C431.1 463.8 439.2 467.0 455.0 472.0 C470.8 477.0 497.8 484.8 515.0 488.0 C532.2 491.2 543.0 491.3 558.0 491.0 C573.0 490.7 591.3 490.8 605.0 486.0 C618.7 481.2 634.2 466.0 640.0 462.0 L640.0 462.0 C642.3 454.0 651.4 425.2 653.7 414.0 C656.0 402.8 655.0 402.0 653.7 395.0 C652.4 388.0 649.8 379.3 646.0 372.0 C642.2 364.7 633.3 354.5 630.8 351.0 L630.8 351.0 C612.3 347.5 556.8 336.8 520.0 330.0 C483.2 323.2 428.2 313.3 409.9 310.0 Z" fill="none" stroke="#2e1a24" stroke-width="44.0" opacity="0.85" filter="url(#mdlrbb)" transform="translate(5.0 2.0)"/></g>
<g clip-path="url(#cm)"><path d="M409.9 310.0 C409.9 308.5 409.7 304.3 409.9 301.0 C410.1 297.7 410.2 294.1 411.0 290.3 C411.8 286.5 413.0 282.0 414.7 278.4 C416.4 274.8 418.5 271.8 421.2 268.8 C423.9 265.8 427.2 262.7 430.8 260.5 C434.4 258.3 438.3 257.1 442.7 255.7 C447.1 254.3 454.6 252.6 457.0 252.0 L457.0 252.0 C467.5 249.7 497.4 234.7 520.0 238.0 C542.6 241.3 580.5 266.3 592.6 272.0 L592.6 272.0 C595.1 273.1 602.8 274.6 607.9 278.6 C613.0 282.6 618.8 289.8 623.2 295.8 C627.7 301.9 632.1 309.2 634.6 314.9 C637.1 320.6 638.4 324.9 638.4 330.0 C638.4 335.1 635.9 341.9 634.6 345.4 C633.3 348.9 631.4 350.2 630.8 351.1 L630.8 351.1 C629.8 351.8 628.8 353.9 625.0 355.0 C621.2 356.1 614.6 357.0 607.9 357.6 C601.2 358.2 593.0 358.9 585.0 358.8 C577.0 358.7 571.7 358.5 560.0 357.0 C548.3 355.5 528.3 352.5 515.0 350.0 C501.7 347.5 493.3 345.6 480.0 342.0 C466.7 338.4 444.9 332.2 435.0 328.6 C425.1 325.0 424.2 322.7 420.6 320.3 C417.0 317.9 415.3 316.0 413.5 314.3 C411.7 312.6 410.5 310.7 409.9 310.0 Z" fill="url(#gm)"/>
<path d="M409.9 310.0 C409.9 308.5 409.7 304.3 409.9 301.0 C410.1 297.7 410.2 294.1 411.0 290.3 C411.8 286.5 413.0 282.0 414.7 278.4 C416.4 274.8 418.5 271.8 421.2 268.8 C423.9 265.8 427.2 262.7 430.8 260.5 C434.4 258.3 438.3 257.1 442.7 255.7 C447.1 254.3 454.6 252.6 457.0 252.0 L457.0 252.0 C467.5 249.7 497.4 234.7 520.0 238.0 C542.6 241.3 580.5 266.3 592.6 272.0 L592.6 272.0 C595.1 273.1 602.8 274.6 607.9 278.6 C613.0 282.6 618.8 289.8 623.2 295.8 C627.7 301.9 632.1 309.2 634.6 314.9 C637.1 320.6 638.4 324.9 638.4 330.0 C638.4 335.1 635.9 341.9 634.6 345.4 C633.3 348.9 631.4 350.2 630.8 351.1 L630.8 351.1 C632.3 355.9 645.1 371.9 640.0 380.0 C634.9 388.1 623.3 397.5 600.0 400.0 C576.7 402.5 530.0 401.7 500.0 395.0 C470.0 388.3 436.7 370.8 420.0 360.0 C403.3 349.2 401.7 338.3 400.0 330.0 C398.3 321.7 408.2 313.3 409.9 310.0 Z" fill="none" stroke="#2e1a24" stroke-width="29.92" opacity="0.85" filter="url(#mdlrbm)" transform="translate(3.4000000000000004 1.36)"/></g>
<path d="M490.0 228.0 C490.9 227.6 493.3 226.6 495.3 225.5 C497.3 224.4 499.9 222.5 502.0 221.5 C504.1 220.5 503.6 219.9 508.2 219.6 C512.8 219.2 523.6 219.1 529.3 219.4 C535.0 219.7 538.4 220.3 542.2 221.4 C546.0 222.5 548.7 224.7 552.0 226.0 C555.3 227.3 560.5 227.3 562.0 229.0 C563.5 230.7 563.7 234.9 561.0 236.0 C558.3 237.1 551.4 236.1 545.7 235.5 C540.0 234.9 534.0 233.7 527.0 232.6 C520.0 231.5 507.4 229.6 503.5 229.0 Z" fill="url(#grim)"/>
<g clip-path="url(#ct)"><path d="M455.9 255.4 C456.2 254.1 456.4 250.0 457.5 247.5 C458.6 245.0 459.9 242.7 462.3 240.3 C464.7 237.9 468.6 235.3 471.8 233.2 C475.0 231.1 477.2 228.8 481.3 227.6 C485.4 226.4 490.0 225.7 496.4 226.0 C502.8 226.3 511.3 227.6 519.5 229.2 C527.7 230.8 539.8 234.4 545.7 235.5 C551.6 236.6 552.3 237.1 555.0 236.0 C557.7 234.9 559.6 230.4 562.0 229.0 C564.4 227.6 566.2 226.9 569.2 227.5 C572.2 228.1 576.7 230.2 579.8 232.6 C582.9 235.0 585.9 238.7 588.0 242.0 C590.1 245.3 591.7 248.9 592.6 252.2 C593.5 255.5 593.9 258.4 593.4 261.8 C592.9 265.2 590.8 269.7 589.4 272.9 C588.0 276.1 585.5 279.6 584.7 280.9 L584.7 280.9 C583.6 281.4 582.5 283.4 578.3 284.0 C574.0 284.6 566.4 285.1 559.2 284.8 C552.1 284.5 544.7 283.9 535.4 282.4 C526.1 280.9 514.2 278.6 503.6 276.0 C493.0 273.4 479.8 269.9 471.8 266.5 C463.9 263.1 458.5 257.2 455.9 255.4 Z" fill="url(#gt)"/>
<path d="M455.9 255.4 C456.2 254.1 456.4 250.0 457.5 247.5 C458.6 245.0 459.9 242.7 462.3 240.3 C464.7 237.9 468.6 235.3 471.8 233.2 C475.0 231.1 477.2 228.8 481.3 227.6 C485.4 226.4 490.0 225.7 496.4 226.0 C502.8 226.3 511.3 227.6 519.5 229.2 C527.7 230.8 539.8 234.4 545.7 235.5 C551.6 236.6 552.3 237.1 555.0 236.0 C557.7 234.9 559.6 230.4 562.0 229.0 C564.4 227.6 566.2 226.9 569.2 227.5 C572.2 228.1 576.7 230.2 579.8 232.6 C582.9 235.0 585.9 238.7 588.0 242.0 C590.1 245.3 591.7 248.9 592.6 252.2 C593.5 255.5 593.9 258.4 593.4 261.8 C592.9 265.2 590.8 269.7 589.4 272.9 C588.0 276.1 585.5 279.6 584.7 280.9 L584.7 280.9 C587.2 284.1 604.1 294.3 600.0 300.0 C595.9 305.7 576.7 314.2 560.0 315.0 C543.3 315.8 517.5 310.0 500.0 305.0 C482.5 300.0 463.3 291.7 455.0 285.0 C446.7 278.3 449.9 269.9 450.0 265.0 C450.1 260.1 454.9 257.0 455.9 255.4 Z" fill="none" stroke="#2e1a24" stroke-width="17.6" opacity="0.85" filter="url(#mdlrbt)" transform="translate(2.0 0.8)"/></g>
<path d="M534.0 228.5 C533.6 225.8 542.2 221.9 545.7 218.5 C549.2 215.1 553.0 210.4 555.1 207.9 C557.2 205.4 557.0 204.0 558.5 203.3 C560.0 202.6 563.0 202.2 564.0 203.8 C565.0 205.4 564.6 209.0 564.5 212.6 C564.4 216.2 563.9 221.6 563.3 225.5 C562.7 229.4 563.5 234.2 561.0 235.8 C558.5 237.4 552.5 236.2 548.0 235.0 C543.5 233.8 534.4 231.2 534.0 228.5Z" fill="url(#gtip)"/>
<ellipse cx="520" cy="400" rx="48" ry="17" fill="#f8b8e0" opacity="0.55" filter="url(#mdlbl)" transform="rotate(20 520 400)"/>
<ellipse cx="526" cy="322" rx="36" ry="12" fill="#f8b8e0" opacity="0.5" filter="url(#mdlbl)" transform="rotate(16 526 322)"/>
<ellipse cx="528" cy="262" rx="26" ry="8" fill="#f8b8e0" opacity="0.45" filter="url(#mdlbl2)" transform="rotate(10 528 262)"/>
<g fill="#fff">
<ellipse cx="518" cy="399" rx="30" ry="11" opacity="0.85" filter="url(#mdlbl)" transform="rotate(18 518 399)"/>
<ellipse cx="524" cy="401" rx="13" ry="6" opacity="0.95" filter="url(#mdlbl2)" transform="rotate(10 524 401)"/>
<ellipse cx="524" cy="321" rx="23" ry="8" opacity="0.85" filter="url(#mdlbl)" transform="rotate(15 524 321)"/>
<ellipse cx="527" cy="323" rx="10" ry="4.5" opacity="0.95" filter="url(#mdlbl2)" transform="rotate(10 527 323)"/>
<ellipse cx="527" cy="262" rx="17" ry="6" opacity="0.85" filter="url(#mdlbl2)" transform="rotate(8 527 262)"/>
<ellipse cx="529" cy="263" rx="8" ry="3" opacity="0.95" filter="url(#mdlbl1)" transform="rotate(8 529 263)"/>
</g>
<path d="M584.7 280.9 C583.6 281.4 582.5 283.4 578.3 284.0 C574.0 284.6 566.4 285.1 559.2 284.8 C552.1 284.5 544.7 283.9 535.4 282.4 C526.1 280.9 514.2 278.6 503.6 276.0 C493.0 273.4 479.8 269.9 471.8 266.5 C463.9 263.1 458.5 257.2 455.9 255.4" stroke="#f8b8e0" stroke-width="1.1" fill="none"/>
<path d="M630.8 351.1 C629.8 351.8 628.8 353.9 625.0 355.0 C621.2 356.1 614.6 357.0 607.9 357.6 C601.2 358.2 593.0 358.9 585.0 358.8 C577.0 358.7 571.7 358.5 560.0 357.0 C548.3 355.5 528.3 352.5 515.0 350.0 C501.7 347.5 493.3 345.6 480.0 342.0 C466.7 338.4 444.9 332.2 435.0 328.6 C425.1 325.0 424.2 322.7 420.6 320.3 C417.0 317.9 415.3 316.0 413.5 314.3 C411.7 312.6 410.5 310.7 409.9 310.0" stroke="#f8b8e0" stroke-width="1.1" fill="none"/>
<path d="M388.4 437.2 C390.8 438.4 397.9 442.3 402.7 444.4 C407.5 446.5 408.3 446.7 417.0 450.0 C425.7 453.3 444.5 460.6 455.0 464.0 C465.5 467.4 470.0 468.1 480.0 470.5 C490.0 472.9 504.2 476.7 515.0 478.5 C525.8 480.3 535.5 480.9 545.0 481.5 C554.5 482.1 562.8 482.4 572.0 482.0 C581.2 481.6 595.6 479.5 600.3 479.0" stroke="#f8b8e0" stroke-width="1.1" fill="none"/>
<path d="M530 279 V291" stroke="#20c020" stroke-width="1.4"/>
<path d="M517 289 L530 292" stroke="#a01030" stroke-width="1.2"/>
<path d="M530 292 L537 292" stroke="#4090e0" stroke-width="1.2"/>
<circle cx="530" cy="278" r="2.3" fill="#20d020"/>
<circle cx="516" cy="289" r="2" fill="#a01030"/>
<circle cx="537.5" cy="292" r="2" fill="#40a0f0"/>
</svg>
<div class="a" style="left:4px;top:608px;width:1018px;height:21px;background:#d7d6db"></div>
<svg class="a" style="left:6px;top:618px" width="12" height="11" viewBox="0 0 12 11"><path d="M0.5 3.5 H5.5 V0.5 L11.5 5.5 L5.5 10.5 V7.5 H0.5Z" fill="#10f080" stroke="#000" stroke-width="1"/></svg>
<div class="a" style="left:20px;top:618px;font-size:12px;line-height:14px;white-space:nowrap">按住<span style="font-size:10px">CTRL</span>键选取边以添加到集中，或通过选取一条边或一个曲面创建新集。</div>

<div class="a" style="left:1008px;top:608px;width:8px;height:15px;border:1px solid #fff;background:linear-gradient(90deg,#f4f8fc,#dce6f0)"></div>
<div class="a" style="left:1017px;top:608px;width:5px;height:15px;border:1px solid #b8b8b8;border-right:none;background:#e6e6e8"></div>
<div class="a" style="left:811px;top:562px;width:206px;height:62px;background:rgba(255,255,255,0.34)"></div>
<svg class="a" style="left:811px;top:562px" width="206" height="62" viewBox="811 562 206 62">
<defs><clipPath id="wcl"><rect x="811" y="562" width="140" height="43"/></clipPath><clipPath id="wcr"><rect x="951" y="562" width="70" height="62"/><rect x="811" y="605" width="210" height="20"/></clipPath></defs>
<g clip-path="url(#wcl)">
<path d="M849 601 Q838 602 826 596 Q815 588 814 577 Q815 567 825 567 Q840 567 852 585 Q855 593 850 600 Q851 590 846 583 Q836 571 826 571 Q819 572 819 580 Q820 590 830 597 Q840 602 849 601Z" fill="#173a6a"/>
<path d="M843 596 Q852 585 861 583 Q870 584 868 597 Q865 610 851 618 Q842 620 840 611 Q846 616 853 611 Q864 603 864 593 Q864 585 858 587 Q850 590 843 596Z" fill="#7a1a32"/>
<path d="M844 596 Q836 593 826 598 Q820 604 824 610 Q828 612 833 610 Q826 609 825 604 Q828 597 844 596Z" fill="#56678a"/>
</g>
<g clip-path="url(#wcr)">
<path d="M843 596 Q852 585 861 583 Q870 584 868 597 Q865 610 851 618 Q842 620 840 611 Q846 616 853 611 Q864 603 864 593 Q864 585 858 587 Q850 590 843 596Z" fill="#e8909e"/>
<path d="M844 596 Q836 593 826 598 Q820 604 824 610 Q828 612 833 610 Q826 609 825 604 Q828 597 844 596Z" fill="#aab4c6"/>
</g>
<g font-family="Liberation Serif" font-size="27" font-weight="bold">
<text x="881" y="592" fill="#0a5832" stroke="#0a5832" stroke-width="0.35" clip-path="url(#wcl)" textLength="118" lengthAdjust="spacingAndGlyphs">野火论坛</text>
<text x="881" y="592" fill="#8fd4a6" stroke="#8fd4a6" stroke-width="0.35" clip-path="url(#wcr)" textLength="118" lengthAdjust="spacingAndGlyphs">野火论坛</text>
</g>
<text x="868.5" y="616.5" font-family="Liberation Sans" font-size="15.5" fill="#bcd8d8" textLength="145" lengthAdjust="spacingAndGlyphs">www.proewildfire.cn</text>
</svg>
</body></html>
